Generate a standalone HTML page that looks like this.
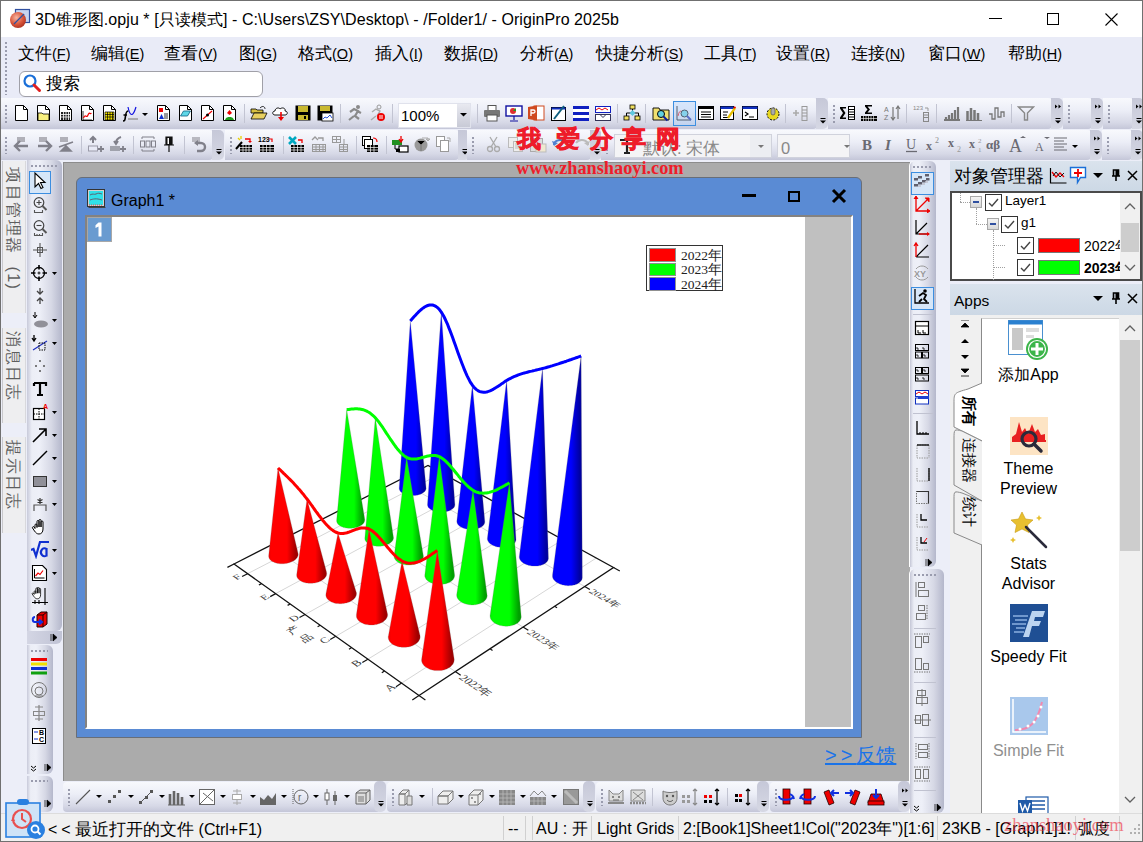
<!DOCTYPE html>
<html><head><meta charset="utf-8">
<style>
*{box-sizing:border-box;margin:0;padding:0}
html,body{width:1143px;height:842px;overflow:hidden}
body{position:relative;background:#eceef8;font-family:"Liberation Sans",sans-serif;color:#000}
.a{position:absolute}
.t{position:absolute;white-space:nowrap;line-height:1}
.tb{position:absolute;background:linear-gradient(#f8f9fd 0%,#eceef7 40%,#d6d8e6 80%,#c4c6d8 100%);border-radius:0 4px 4px 0}
.grip{position:absolute;width:2px;background:repeating-linear-gradient(#9a9cae 0 2px,transparent 2px 4px)}
.ic{position:absolute}
.sep{position:absolute;width:1px;background:#c2c4d2}
</style></head><body>
<!-- title bar -->
<div class="a" style="left:0;top:0;width:1143px;height:37px;background:#fff"></div>
<svg class="a" style="left:7px;top:5px" width="26" height="26" viewBox="0 0 26 26">
<rect x="8.5" y="4.5" width="14" height="13" fill="#c8d4f0" stroke="#3050a0" stroke-width="1.2"/>
<defs><radialGradient id="ogr" cx="0.4" cy="0.35" r="0.7"><stop offset="0" stop-color="#f7b5a0"/><stop offset="0.6" stop-color="#d9553a"/><stop offset="1" stop-color="#a83020"/></radialGradient></defs>
<circle cx="11" cy="15" r="8" fill="url(#ogr)"/>
<line x1="7" y1="19" x2="17" y2="9" stroke="#3050a0" stroke-width="1.3"/>
</svg>
<div class="t" style="left:35px;top:12px;font-size:16px;letter-spacing:0.07px">3D锥形图.opju * [只读模式] - C:\Users\ZSY\Desktop\ - /Folder1/ - OriginPro 2025b</div>
<div class="a" style="left:989px;top:18px;width:13px;height:1px;background:#000"></div>
<div class="a" style="left:1047px;top:13px;width:12px;height:12px;border:1px solid #000"></div>
<svg class="a" style="left:1104px;top:12px" width="15" height="15"><path d="M1.5 1.5L13.5 13.5M13.5 1.5L1.5 13.5" stroke="#000" stroke-width="1.1"/></svg>

<!-- menu bar -->
<div class="a" style="left:0;top:37px;width:1143px;height:61px;background:#e9ebf7"></div>
<div class="grip" style="left:5px;top:42px;height:53px"></div>
<div class="t" style="left:18px;top:45px;font-size:17px">文件<span style="font-size:14.5px">(<u>F</u>)</span></div>
<div class="t" style="left:91px;top:45px;font-size:17px">编辑<span style="font-size:14.5px">(<u>E</u>)</span></div>
<div class="t" style="left:164px;top:45px;font-size:17px">查看<span style="font-size:14.5px">(<u>V</u>)</span></div>
<div class="t" style="left:239px;top:45px;font-size:17px">图<span style="font-size:14.5px">(<u>G</u>)</span></div>
<div class="t" style="left:298px;top:45px;font-size:17px">格式<span style="font-size:14.5px">(<u>O</u>)</span></div>
<div class="t" style="left:375px;top:45px;font-size:17px">插入<span style="font-size:14.5px">(<u>I</u>)</span></div>
<div class="t" style="left:444px;top:45px;font-size:17px">数据<span style="font-size:14.5px">(<u>D</u>)</span></div>
<div class="t" style="left:520px;top:45px;font-size:17px">分析<span style="font-size:14.5px">(<u>A</u>)</span></div>
<div class="t" style="left:596px;top:45px;font-size:17px">快捷分析<span style="font-size:14.5px">(<u>S</u>)</span></div>
<div class="t" style="left:704px;top:45px;font-size:17px">工具<span style="font-size:14.5px">(<u>T</u>)</span></div>
<div class="t" style="left:776px;top:45px;font-size:17px">设置<span style="font-size:14.5px">(<u>R</u>)</span></div>
<div class="t" style="left:851px;top:45px;font-size:17px">连接<span style="font-size:14.5px">(<u>N</u>)</span></div>
<div class="t" style="left:928px;top:45px;font-size:17px">窗口<span style="font-size:14.5px">(<u>W</u>)</span></div>
<div class="t" style="left:1008px;top:45px;font-size:17px">帮助<span style="font-size:14.5px">(<u>H</u>)</span></div>
<div class="a" style="left:19px;top:71px;width:244px;height:26px;background:#fff;border:1px solid #a0a0a8;border-radius:6px"></div>
<svg class="a" style="left:22px;top:73px" width="20" height="20" viewBox="0 0 20 20"><circle cx="8" cy="8" r="5.5" fill="none" stroke="#1a6fd8" stroke-width="2.2"/><path d="M12 12L17.5 17.5" stroke="#e02020" stroke-width="3" stroke-linecap="round"/></svg>
<div class="t" style="left:46px;top:75px;font-size:17px">搜索</div>

<!-- toolbars -->
<div class="tb" style="left:0px;top:98px;width:817px;height:31px"></div><div class="grip" style="left:5px;top:105px;height:18px"></div>
<div class="a" style="left:816px;top:98px;width:12px;height:31px;background:linear-gradient(#c6c8d8,#d6d8e4);border-radius:0 5px 5px 0"></div><svg class="ic" style="left:818px;top:117px" width="10" height="8" viewBox="0 0 10 8"><path d="M2.5 1.5h5" stroke="#000" stroke-width="1"/><path d="M2 3.5h6l-3 3z" fill="#000"/></svg>
<div class="tb" style="left:828px;top:98px;width:224px;height:31px"></div><div class="grip" style="left:833px;top:105px;height:18px"></div>
<div class="a" style="left:1051px;top:98px;width:12px;height:31px;background:linear-gradient(#c6c8d8,#d6d8e4);border-radius:0 5px 5px 0"></div><svg class="ic" style="left:1053px;top:103px" width="10" height="8" viewBox="0 0 10 8"><path d="M2 1.5l2.5 2-2.5 2zM5.5 1.5l2.5 2-2.5 2z" fill="#000"/></svg><svg class="ic" style="left:1053px;top:117px" width="10" height="8" viewBox="0 0 10 8"><path d="M2.5 1.5h5" stroke="#000" stroke-width="1"/><path d="M2 3.5h6l-3 3z" fill="#000"/></svg>
<div class="tb" style="left:1063px;top:98px;width:29px;height:31px"></div><div class="grip" style="left:1068px;top:105px;height:18px"></div>
<div class="a" style="left:1091px;top:98px;width:12px;height:31px;background:linear-gradient(#c6c8d8,#d6d8e4);border-radius:0 5px 5px 0"></div><svg class="ic" style="left:1093px;top:103px" width="10" height="8" viewBox="0 0 10 8"><path d="M2 1.5l2.5 2-2.5 2zM5.5 1.5l2.5 2-2.5 2z" fill="#000"/></svg><svg class="ic" style="left:1093px;top:117px" width="10" height="8" viewBox="0 0 10 8"><path d="M2.5 1.5h5" stroke="#000" stroke-width="1"/><path d="M2 3.5h6l-3 3z" fill="#000"/></svg>
<div class="tb" style="left:1103px;top:98px;width:30px;height:31px"></div><div class="grip" style="left:1108px;top:105px;height:18px"></div>
<div class="a" style="left:1132px;top:98px;width:12px;height:31px;background:linear-gradient(#c6c8d8,#d6d8e4);border-radius:0 5px 5px 0"></div><svg class="ic" style="left:1134px;top:103px" width="10" height="8" viewBox="0 0 10 8"><path d="M2 1.5l2.5 2-2.5 2zM5.5 1.5l2.5 2-2.5 2z" fill="#000"/></svg><svg class="ic" style="left:1134px;top:117px" width="10" height="8" viewBox="0 0 10 8"><path d="M2.5 1.5h5" stroke="#000" stroke-width="1"/><path d="M2 3.5h6l-3 3z" fill="#000"/></svg>
<div class="tb" style="left:0px;top:130px;width:213px;height:30px"></div><div class="grip" style="left:5px;top:137px;height:17px"></div>
<div class="a" style="left:212px;top:130px;width:12px;height:30px;background:linear-gradient(#c6c8d8,#d6d8e4);border-radius:0 5px 5px 0"></div><svg class="ic" style="left:214px;top:148px" width="10" height="8" viewBox="0 0 10 8"><path d="M2.5 1.5h5" stroke="#000" stroke-width="1"/><path d="M2 3.5h6l-3 3z" fill="#000"/></svg>
<div class="tb" style="left:225px;top:130px;width:234px;height:30px"></div><div class="grip" style="left:230px;top:137px;height:17px"></div>
<div class="a" style="left:458px;top:130px;width:12px;height:30px;background:linear-gradient(#c6c8d8,#d6d8e4);border-radius:0 5px 5px 0"></div><svg class="ic" style="left:460px;top:148px" width="10" height="8" viewBox="0 0 10 8"><path d="M2.5 1.5h5" stroke="#000" stroke-width="1"/><path d="M2 3.5h6l-3 3z" fill="#000"/></svg>
<div class="tb" style="left:467px;top:130px;width:124px;height:30px"></div><div class="grip" style="left:472px;top:137px;height:17px"></div>
<div class="a" style="left:590px;top:130px;width:12px;height:30px;background:linear-gradient(#c6c8d8,#d6d8e4);border-radius:0 5px 5px 0"></div><svg class="ic" style="left:592px;top:148px" width="10" height="8" viewBox="0 0 10 8"><path d="M2.5 1.5h5" stroke="#000" stroke-width="1"/><path d="M2 3.5h6l-3 3z" fill="#000"/></svg>
<div class="tb" style="left:601px;top:130px;width:490px;height:30px"></div><div class="grip" style="left:606px;top:137px;height:17px"></div>
<div class="a" style="left:1090px;top:130px;width:12px;height:30px;background:linear-gradient(#c6c8d8,#d6d8e4);border-radius:0 5px 5px 0"></div><svg class="ic" style="left:1092px;top:135px" width="10" height="8" viewBox="0 0 10 8"><path d="M2 1.5l2.5 2-2.5 2zM5.5 1.5l2.5 2-2.5 2z" fill="#000"/></svg><svg class="ic" style="left:1092px;top:148px" width="10" height="8" viewBox="0 0 10 8"><path d="M2.5 1.5h5" stroke="#000" stroke-width="1"/><path d="M2 3.5h6l-3 3z" fill="#000"/></svg>
<div class="tb" style="left:1102px;top:130px;width:30px;height:30px"></div><div class="grip" style="left:1107px;top:137px;height:17px"></div>
<div class="a" style="left:1131px;top:130px;width:12px;height:30px;background:linear-gradient(#c6c8d8,#d6d8e4);border-radius:0 5px 5px 0"></div><svg class="ic" style="left:1133px;top:135px" width="10" height="8" viewBox="0 0 10 8"><path d="M2 1.5l2.5 2-2.5 2zM5.5 1.5l2.5 2-2.5 2z" fill="#000"/></svg><svg class="ic" style="left:1133px;top:148px" width="10" height="8" viewBox="0 0 10 8"><path d="M2.5 1.5h5" stroke="#000" stroke-width="1"/><path d="M2 3.5h6l-3 3z" fill="#000"/></svg>
<svg class="ic" style="left:13px;top:104px" width="18" height="18" viewBox="0 0 18 18"><path d="M2.5 1.5h8l4 4v11h-12z" fill="#fff" stroke="#000"/><path d="M10.5 1.5v4h4" fill="none" stroke="#000"/></svg>
<svg class="ic" style="left:35px;top:104px" width="18" height="18" viewBox="0 0 18 18"><path d="M2.5 1.5h8l4 4v11h-12z" fill="#fff" stroke="#000"/><path d="M10.5 1.5v4h4" fill="none" stroke="#000"/><path d="M3 9h4l1 1h6v6.5h-11z" fill="#f8f080" stroke="#000" stroke-width=".8"/></svg>
<svg class="ic" style="left:57px;top:104px" width="18" height="18" viewBox="0 0 18 18"><path d="M2.5 1.5h8l4 4v11h-12z" fill="#fff" stroke="#000"/><path d="M10.5 1.5v4h4" fill="none" stroke="#000"/><path d="M4 8h9v8h-9z" fill="#222"/><path d="M4 10.5h9M4 13h9M6.5 8v8M9 8v8M11.5 8v8" stroke="#fff" stroke-width=".8"/></svg>
<svg class="ic" style="left:79px;top:104px" width="18" height="18" viewBox="0 0 18 18"><path d="M2.5 1.5h8l4 4v11h-12z" fill="#fff" stroke="#000"/><path d="M10.5 1.5v4h4" fill="none" stroke="#000"/><path d="M4 7v9h9" fill="none" stroke="#000" stroke-width=".8"/><path d="M4.5 14c2-5 3 1 4.5-3s2 0 3.5-2" fill="none" stroke="#e00" stroke-width="1.2"/></svg>
<svg class="ic" style="left:101px;top:104px" width="18" height="18" viewBox="0 0 18 18"><path d="M2.5 1.5h8l4 4v11h-12z" fill="#fff" stroke="#000"/><path d="M10.5 1.5v4h4" fill="none" stroke="#000"/><path d="M4 8h9v8h-9z" fill="#f0e000" stroke="#000" stroke-width=".7"/><path d="M4 10.5h9M4 13h9M6.5 8v8M9 8v8M11.5 8v8" stroke="#000" stroke-width=".7"/></svg>
<svg class="ic" style="left:122px;top:104px" width="18" height="18" viewBox="0 0 18 18"><path d="M1 17c2 0 2-1 2.5-5s1-5 3-5M1.5 11h3.5" fill="none" stroke="#000" stroke-width="1.6"/><path d="M6 3c2 10 5 10 8 0" fill="none" stroke="#1010e0" stroke-width="1.2"/><path d="M6 15h10" stroke="#999" stroke-width="1.5"/></svg>
<svg class="ic" style="left:141px;top:106px" width="18" height="18" viewBox="0 0 18 18"><path d="M1 7h6l-3 3z" fill="#000"/></svg>
<svg class="ic" style="left:155px;top:104px" width="18" height="18" viewBox="0 0 18 18"><path d="M2.5 1.5h8l4 4v11h-12z" fill="#fff" stroke="#000"/><path d="M10.5 1.5v4h4" fill="none" stroke="#000"/><rect x="4" y="4" width="4" height="4" fill="#e00"/><path d="M4 15l2.5-5 2.5 5z" fill="#1030d0"/><path d="M9 10h4M9 12h4M9 14h4" stroke="#000" stroke-width=".8"/></svg>
<svg class="ic" style="left:177px;top:104px" width="18" height="18" viewBox="0 0 18 18"><path d="M2.5 1.5h8l4 4v11h-12z" fill="#fff" stroke="#000"/><path d="M10.5 1.5v4h4" fill="none" stroke="#000"/><path d="M3.5 12l3-5h7l-3 5z" fill="#60d8e8" stroke="#106080" stroke-width=".8"/></svg>
<svg class="ic" style="left:199px;top:104px" width="18" height="18" viewBox="0 0 18 18"><path d="M2.5 1.5h8l4 4v11h-12z" fill="#fff" stroke="#000"/><path d="M10.5 1.5v4h4" fill="none" stroke="#000"/><path d="M4 15l9-8" stroke="#e00" stroke-width="1.2"/><circle cx="8.5" cy="11" r="1.5" fill="#000"/></svg>
<svg class="ic" style="left:221px;top:104px" width="18" height="18" viewBox="0 0 18 18"><path d="M2.5 1.5h8l4 4v11h-12z" fill="#fff" stroke="#000"/><path d="M10.5 1.5v4h4" fill="none" stroke="#000"/><path d="M6 9l2.5-3 2.5 3-2.5 2z" fill="#e00"/><path d="M4 16c1-3 3-3 4.5-3s3.5 0 4.5 3z" fill="#20a020"/></svg>
<svg class="ic" style="left:250px;top:104px" width="18" height="18" viewBox="0 0 18 18"><path d="M1 5h5l1 1h6v3h-12z" fill="#d8c040" stroke="#000" stroke-width=".8"/><path d="M1 15l3-6h13l-3 6z" fill="#e8d060" stroke="#000" stroke-width=".8"/><path d="M10 4c3-3 5-1 5 1" fill="none" stroke="#000" stroke-width=".8"/></svg>
<svg class="ic" style="left:272px;top:104px" width="18" height="18" viewBox="0 0 18 18"><path d="M3 11c-3 0-3-4 0-4 0-3 4-4 5-2 2-2 6-1 5 2 3 0 3 4 0 4z" fill="#fff" stroke="#000" stroke-width=".9"/><path d="M9 8v7" stroke="#e00" stroke-width="1.6"/><path d="M6 13h6l-3 4z" fill="#e00"/></svg>
<svg class="ic" style="left:294px;top:104px" width="18" height="18" viewBox="0 0 18 18"><path d="M1.5 1.5h15v15h-15z" fill="#000"/><rect x="4" y="2" width="10" height="6" fill="#c8b830"/><rect x="4" y="11" width="10" height="5" fill="#c8b830"/><rect x="10" y="12" width="2" height="3" fill="#000"/></svg>
<svg class="ic" style="left:316px;top:104px" width="18" height="18" viewBox="0 0 18 18"><path d="M1.5 1.5h15v15h-15z" fill="#000"/><rect x="4" y="2" width="10" height="5" fill="#c8b830"/><rect x="6" y="9" width="11" height="8" fill="#fff" stroke="#000" stroke-width=".8"/><path d="M7 15l2-2 2 1 3-3 2 3" fill="none" stroke="#1040d0" stroke-width=".9"/></svg>
<svg class="ic" style="left:346px;top:104px" width="18" height="18" viewBox="0 0 18 18"><circle cx="12" cy="3" r="2" fill="#8a8a8a"/><path d="M4 8l4-3 4 2-3 5 4 3M8 12l-5 4M11 7l4 2" fill="none" stroke="#8a8a8a" stroke-width="2.2"/></svg>
<svg class="ic" style="left:368px;top:104px" width="18" height="18" viewBox="0 0 18 18"><circle cx="11" cy="3" r="2" fill="none" stroke="#999"/><path d="M4 8l4-3 4 2-3 5M8 12l-5 4" fill="none" stroke="#aaa" stroke-width="1.4"/><circle cx="13" cy="13" r="4" fill="#e00"/><path d="M12 11v4M14 11v4" stroke="#fff"/></svg>
<svg class="ic" style="left:483px;top:104px" width="18" height="18" viewBox="0 0 18 18"><rect x="5" y="1.5" width="8" height="5" fill="#fff" stroke="#555"/><rect x="1" y="6" width="16" height="7" rx="1" fill="#777"/><rect x="4" y="11" width="10" height="6" fill="#fff" stroke="#555"/></svg>
<svg class="ic" style="left:505px;top:104px" width="18" height="18" viewBox="0 0 18 18"><rect x="1" y="2" width="16" height="10" fill="#fff" stroke="#1010a0" stroke-width="1.4"/><circle cx="8" cy="7" r="3" fill="#e03030"/><path d="M8 7h3v-3" fill="#20a020"/><path d="M9 12v4M5 17h8" stroke="#1010a0" stroke-width="1.2"/></svg>
<svg class="ic" style="left:527px;top:104px" width="18" height="18" viewBox="0 0 18 18"><rect x="7" y="2" width="10" height="14" fill="#fff" stroke="#d04a20"/><path d="M1 3l9-1.5v15l-9-1.5z" fill="#d04a20"/><path d="M4 12V6h2.5a1.5 1.5 0 010 3H4" fill="none" stroke="#fff" stroke-width="1.3"/></svg>
<svg class="ic" style="left:550px;top:104px" width="18" height="18" viewBox="0 0 18 18"><rect x="1.5" y="3.5" width="14" height="13" fill="#fff" stroke="#000"/><rect x="1.5" y="3.5" width="14" height="2" fill="#1030c0"/><path d="M4 15l10-13" stroke="#106080" stroke-width="2"/></svg>
<svg class="ic" style="left:572px;top:104px" width="18" height="18" viewBox="0 0 18 18"><rect x="1" y="2" width="16" height="14" fill="#fff"/><rect x="1" y="2" width="16" height="3" fill="#1020c0"/><rect x="1" y="8" width="16" height="3" fill="#1020c0"/><rect x="1" y="14" width="16" height="3" fill="#1020c0"/></svg>
<svg class="ic" style="left:594px;top:104px" width="18" height="18" viewBox="0 0 18 18"><rect x="1.5" y="2.5" width="15" height="6" fill="#fff" stroke="#1020c0"/><path d="M2 6l3-2 3 2 3-2 3 2" stroke="#e00" fill="none"/><rect x="1.5" y="10.5" width="15" height="6" fill="#fff" stroke="#335"/><path d="M6 10.5l3 3 3-3" fill="none" stroke="#335"/></svg>
<svg class="ic" style="left:623px;top:104px" width="18" height="18" viewBox="0 0 18 18"><rect x="7" y="1" width="5" height="4" fill="#f0e060" stroke="#000" stroke-width=".8"/><rect x="1" y="12" width="5" height="4" fill="#f0e060" stroke="#000" stroke-width=".8"/><rect x="12" y="12" width="5" height="4" fill="#f0e060" stroke="#000" stroke-width=".8"/><path d="M9.5 5v3M3.5 12V9h12v3" fill="none" stroke="#000"/><path d="M9.5 6l3 3-3 3-3-3z" fill="#60c8e0"/></svg>
<svg class="ic" style="left:652px;top:104px" width="18" height="18" viewBox="0 0 18 18"><path d="M1 4h6l1 2h9v10h-16z" fill="#f0e070" stroke="#000" stroke-width=".9"/><circle cx="9" cy="10" r="3.5" fill="#60d0e0" stroke="#000"/><path d="M11.5 12.5l4 4" stroke="#1020a0" stroke-width="2"/></svg>
<svg class="ic" style="left:675px;top:104px" width="18" height="18" viewBox="0 0 18 18"><path d="M2 2v14h14" fill="none" stroke="#000"/><path d="M3 12c2-9 4-2 6-5" fill="none" stroke="#e00"/><circle cx="9.5" cy="9.5" r="3.5" fill="#60d0e0" stroke="#000"/><path d="M12 12l4 4" stroke="#1020a0" stroke-width="2"/></svg>
<svg class="ic" style="left:697px;top:104px" width="18" height="18" viewBox="0 0 18 18"><rect x="1.5" y="2.5" width="15" height="13" fill="#fff" stroke="#000"/><rect x="1.5" y="2.5" width="15" height="2.5" fill="#000"/><path d="M4 8h10M4 10.5h10M4 13h10" stroke="#000"/></svg>
<svg class="ic" style="left:719px;top:104px" width="18" height="18" viewBox="0 0 18 18"><rect x="1.5" y="2.5" width="13" height="13" fill="#fff" stroke="#000"/><rect x="1.5" y="2.5" width="13" height="2.5" fill="#1030c0"/><path d="M4 8h5M4 11h4M4 13.5h6" stroke="#000"/><path d="M9 14l7-10" stroke="#e8c000" stroke-width="2.2"/><path d="M15 3l1.5 1" stroke="#e00" stroke-width="2"/></svg>
<svg class="ic" style="left:741px;top:104px" width="18" height="18" viewBox="0 0 18 18"><rect x="1.5" y="2.5" width="15" height="13" fill="#fff" stroke="#000"/><rect x="1.5" y="2.5" width="15" height="2.5" fill="#1030c0"/><path d="M4 8l3 2-3 2M8 13h5" fill="none" stroke="#000" stroke-width="1.2"/></svg>
<svg class="ic" style="left:764px;top:104px" width="18" height="18" viewBox="0 0 18 18"><circle cx="9" cy="10" r="6" fill="#e8d820" stroke="#000" stroke-width="1" stroke-dasharray="2 1.4"/><rect x="7" y="4" width="4" height="7" rx="2" fill="#aaa" stroke="#555" stroke-width=".7"/></svg>
<svg class="ic" style="left:792px;top:104px" width="18" height="18" viewBox="0 0 18 18"><path d="M1 9h6M4 6v6" stroke="#aaa" stroke-width="1.6"/><rect x="10" y="2.5" width="5" height="14" fill="none" stroke="#999"/><path d="M10 6h5M10 9h5M10 12h5" stroke="#999"/></svg>
<svg class="ic" style="left:838px;top:104px" width="18" height="18" viewBox="0 0 18 18"><path d="M2 3h6v1.5H4.5l3 4.5-3 4.5H8V15H2v-1.5l3-4.5-3-4.5z" fill="#000"/><rect x="10.5" y="2.5" width="6" height="13" fill="#fff" stroke="#000"/><path d="M10.5 5.5h6M10.5 8h6M10.5 10.5h6M10.5 13h6" stroke="#000" stroke-width="1.1"/></svg>
<svg class="ic" style="left:860px;top:104px" width="18" height="18" viewBox="0 0 18 18"><path d="M5 1h7v1.5H7.5l2.5 3-2.5 3H12V10H5V8.5l2.5-3L5 2.5z" fill="#000"/><rect x="1" y="12" width="16" height="5" fill="#000"/><path d="M1 14.5h16M3.5 12v5M6 12v5M8.5 12v5M11 12v5M13.5 12v5" stroke="#fff" stroke-width=".6"/></svg>
<svg class="ic" style="left:883px;top:104px" width="18" height="18" viewBox="0 0 18 18"><text x="1" y="8" font-size="7" fill="#777" font-family="Liberation Sans">A</text><text x="1" y="16" font-size="7" fill="#777" font-family="Liberation Sans">Z</text><path d="M10 3v12M15 15V3M8 13l2 3 2-3M13 5l2-3 2 3" fill="none" stroke="#777" stroke-width="1.2"/></svg>
<svg class="ic" style="left:913px;top:104px" width="18" height="18" viewBox="0 0 18 18"><text x="0" y="6" font-size="6" fill="#888" font-family="Liberation Sans">123</text><path d="M12 4h3v3" fill="none" stroke="#999"/><rect x="10.5" y="8.5" width="5" height="9" fill="none" stroke="#888"/><path d="M10.5 11h5M10.5 13.5h5" stroke="#888"/></svg>
<svg class="ic" style="left:943px;top:104px" width="18" height="18" viewBox="0 0 18 18"><path d="M1 16h16M3 16v-3M6 16v-5M9 16v-7M12 16v-10M15 16v-13" stroke="#777" stroke-width="2.2"/></svg>
<svg class="ic" style="left:965px;top:104px" width="18" height="18" viewBox="0 0 18 18"><path d="M1 16.5h16" stroke="#777"/><path d="M2.5 16V7M6 16V4M9.5 16V6M13 16V9" stroke="#777" stroke-width="2.5"/></svg>
<svg class="ic" style="left:987px;top:104px" width="18" height="18" viewBox="0 0 18 18"><path d="M2 10h3v5h3V4h3v9h3V8h3v5" fill="none" stroke="#777" stroke-width="1.3"/></svg>
<svg class="ic" style="left:1017px;top:104px" width="18" height="18" viewBox="0 0 18 18"><path d="M1.5 3h15l-6 6v7h-3V9z" fill="none" stroke="#888" stroke-width="1.4"/></svg>
<div class="sep" style="left:244px;top:104px;height:19px"></div>
<div class="sep" style="left:340px;top:104px;height:19px"></div>
<div class="sep" style="left:392px;top:104px;height:19px"></div>
<div class="sep" style="left:477px;top:104px;height:19px"></div>
<div class="sep" style="left:617px;top:104px;height:19px"></div>
<div class="sep" style="left:645px;top:104px;height:19px"></div>
<div class="sep" style="left:785px;top:104px;height:19px"></div>
<div class="sep" style="left:906px;top:104px;height:19px"></div>
<div class="sep" style="left:936px;top:104px;height:19px"></div>
<div class="sep" style="left:1011px;top:104px;height:19px"></div>
<div class="a" style="left:398px;top:103px;width:73px;height:25px;background:#fff;border:1px solid #e0e2ec"></div>
<div class="a" style="left:457px;top:104px;width:13px;height:23px;background:linear-gradient(#e8e9f0,#c8cad6)"></div>
<svg class="ic" style="left:459px;top:112px" width="10" height="6" viewBox="0 0 10 6"><path d="M1 1h7l-3.5 3.5z" fill="#000"/></svg>
<div class="t" style="left:401px;top:108px;font-size:15px">100%</div>
<div class="a" style="left:673px;top:101px;width:23px;height:25px;border:1px solid #3c8ee0;background:rgba(180,210,250,.45)"></div>
<svg class="ic" style="left:13px;top:135px" width="18" height="18" viewBox="0 0 18 18"><rect x="4" y="2" width="8" height="5" fill="#b0b0b8"/><path d="M2 11h13M7 6l-5 5 5 5" fill="none" stroke="#80808a" stroke-width="2.4"/></svg>
<svg class="ic" style="left:35px;top:135px" width="18" height="18" viewBox="0 0 18 18"><rect x="4" y="2" width="8" height="5" fill="#b0b0b8"/><path d="M3 11h13M11 6l5 5-5 5" fill="none" stroke="#80808a" stroke-width="2.4"/></svg>
<svg class="ic" style="left:57px;top:135px" width="18" height="18" viewBox="0 0 18 18"><rect x="3" y="2" width="8" height="5" fill="#b0b0b8"/><path d="M2 12l14-5M4 16l5-5 5 5z" fill="#80808a" stroke="#80808a" stroke-width="1.6"/></svg>
<svg class="ic" style="left:87px;top:135px" width="18" height="18" viewBox="0 0 18 18"><path d="M6 8V3M3 5l3-3 3 3" fill="none" stroke="#80808a" stroke-width="2"/><rect x="1.5" y="11" width="9" height="5" fill="#e8eaf6" stroke="#9a9aa8"/><path d="M11 14h6M14 11v6" stroke="#80808a" stroke-width="1.8"/></svg>
<svg class="ic" style="left:109px;top:135px" width="18" height="18" viewBox="0 0 18 18"><path d="M7 8c0-3 2-5 5-6M5 6l2 3 2-3" fill="none" stroke="#80808a" stroke-width="2"/><rect x="1" y="11" width="10" height="5" fill="#a0a2ac"/><path d="M11 14h6M14 11v6" stroke="#80808a" stroke-width="1.8"/></svg>
<svg class="ic" style="left:139px;top:135px" width="18" height="18" viewBox="0 0 18 18"><rect x="1.5" y="6" width="4" height="6" fill="none" stroke="#80808a"/><rect x="7" y="6" width="4" height="6" fill="none" stroke="#80808a"/><rect x="12.5" y="6" width="4" height="6" fill="none" stroke="#80808a"/><path d="M3 4V2h12v2M15 14v2H3v-2" fill="none" stroke="#80808a"/></svg>
<svg class="ic" style="left:160px;top:135px" width="18" height="18" viewBox="0 0 18 18"><path d="M6 2h6v8H6zM4 10h10M9 10v7" fill="#111" stroke="#111" stroke-width="1.2"/><rect x="7.5" y="3" width="1.5" height="6" fill="#fff"/></svg>
<svg class="ic" style="left:190px;top:135px" width="18" height="18" viewBox="0 0 18 18"><rect x="2" y="2" width="8" height="5" fill="#b8b8c0"/><path d="M6 8h5a4 4 0 010 8H7" fill="none" stroke="#80808a" stroke-width="2.4"/><path d="M4 8l4-3v6z" fill="#80808a"/></svg>
<svg class="ic" style="left:235px;top:135px" width="18" height="18" viewBox="0 0 18 18"><path d="M1 14l6-7" stroke="#000" stroke-width="2"/><path d="M3 3l2 2M6 1v3" stroke="#e8d000" stroke-width="1.3"/><rect x="5" y="10" width="12" height="7" fill="#000"/><path d="M5 12.5h12M5 15h12M8 10v7M11 10v7M14 10v7" stroke="#fff" stroke-width=".7"/><path d="M10 4h5v3" fill="none" stroke="#e00" stroke-width="1.3"/><path d="M13 6h4l-2 2z" fill="#e00"/></svg>
<svg class="ic" style="left:257px;top:135px" width="18" height="18" viewBox="0 0 18 18"><text x="1" y="7" font-size="7" font-weight="bold" fill="#000" font-family="Liberation Sans">123</text><path d="M12 4h3v3" fill="none" stroke="#e00" stroke-width="1.2"/><rect x="3" y="10" width="14" height="7" fill="#000"/><path d="M3 12.5h14M3 15h14M6 10v7M9.5 10v7M13 10v7" stroke="#fff" stroke-width=".7"/></svg>
<svg class="ic" style="left:287px;top:135px" width="18" height="18" viewBox="0 0 18 18"><path d="M2 2l7 7M9 2l-7 7" stroke="#00a8c0" stroke-width="2.6"/><rect x="4" y="10" width="13" height="7" fill="#000"/><path d="M4 12.5h13M4 15h13M7 10v7M10.5 10v7M14 10v7" stroke="#fff" stroke-width=".7"/><path d="M11 5h4v3" fill="none" stroke="#e00" stroke-width="1.3"/></svg>
<svg class="ic" style="left:309px;top:135px" width="18" height="18" viewBox="0 0 18 18"><path d="M3 5l3-3 3 3M9 3h5v3" fill="none" stroke="#999" stroke-width="1.3"/><rect x="3.5" y="9.5" width="13" height="7" fill="none" stroke="#999"/><path d="M3.5 12h13M3.5 14.5h13M7 9.5v7M10.5 9.5v7M14 9.5v7" stroke="#999"/></svg>
<svg class="ic" style="left:331px;top:135px" width="18" height="18" viewBox="0 0 18 18"><rect x="1.5" y="1.5" width="8" height="6" fill="none" stroke="#999"/><path d="M1.5 4.5h8M5.5 1.5v6M13 4v5" stroke="#999"/><rect x="8.5" y="9.5" width="8" height="7" fill="none" stroke="#999"/><path d="M8.5 12h8M8.5 14.5h8M12.5 9.5v7" stroke="#999"/></svg>
<svg class="ic" style="left:361px;top:135px" width="18" height="18" viewBox="0 0 18 18"><rect x="1.5" y="1.5" width="8" height="9" fill="#fff" stroke="#000"/><rect x="3.5" y="4.5" width="8" height="9" fill="#fff" stroke="#000"/><rect x="6" y="10" width="11" height="7" fill="#000"/><path d="M6 12.5h11M6 15h11M9.5 10v7M13 10v7" stroke="#fff" stroke-width=".7"/><path d="M12 3c3 0 4 2 4 4" fill="none" stroke="#e00" stroke-width="1.2"/></svg>
<svg class="ic" style="left:391px;top:135px" width="18" height="18" viewBox="0 0 18 18"><rect x="1" y="5" width="10" height="5" fill="#209020"/><path d="M10 1v5M8 4l2 3 2-3" fill="none" stroke="#e00" stroke-width="1.3"/><rect x="8" y="11" width="9" height="6" fill="#fff" stroke="#000" stroke-width="1.2"/><path d="M4 10v4h4" fill="none" stroke="#000"/><rect x="5" y="14" width="4" height="3" fill="#000"/></svg>
<svg class="ic" style="left:413px;top:135px" width="18" height="18" viewBox="0 0 18 18"><circle cx="8" cy="10" r="6.5" fill="#999"/><path d="M4 6l4 4 4-4M8 10v6" stroke="#777"/><path d="M9 3h6v3M13 4h4l-2 2z" fill="none" stroke="#aaa"/></svg>
<svg class="ic" style="left:435px;top:135px" width="18" height="18" viewBox="0 0 18 18"><rect x="1.5" y="1.5" width="8" height="10" fill="#fff" stroke="#999"/><rect x="5.5" y="5.5" width="8" height="11" fill="#fff" stroke="#999"/><path d="M12 3h3v4" fill="none" stroke="#aaa"/></svg>
<svg class="ic" style="left:485px;top:135px" width="18" height="18" viewBox="0 0 18 18"><circle cx="5" cy="14" r="2.5" fill="none" stroke="#aaa" stroke-width="1.3"/><circle cx="12" cy="14" r="2.5" fill="none" stroke="#aaa" stroke-width="1.3"/><path d="M6 12l6-10M11 12L5 2" stroke="#aaa" stroke-width="1.3"/></svg>
<svg class="ic" style="left:507px;top:135px" width="18" height="18" viewBox="0 0 18 18"><rect x="1.5" y="2.5" width="9" height="10" fill="#eee" stroke="#bbb"/><rect x="6.5" y="6.5" width="9" height="10" fill="#eee" stroke="#bbb"/><path d="M8 9h6M8 11h6M8 13h6" stroke="#bbb"/></svg>
<svg class="ic" style="left:529px;top:135px" width="18" height="18" viewBox="0 0 18 18"><rect x="1.5" y="3.5" width="12" height="13" fill="#ddd" stroke="#aaa"/><rect x="7" y="9" width="10" height="8" fill="#f0e8d0" stroke="#bbb"/></svg>
<svg class="ic" style="left:551px;top:135px" width="18" height="18" viewBox="0 0 18 18"><path d="M3 10c0-5 8-7 12-2" fill="none" stroke="#5080d0" stroke-width="2"/><path d="M1 6l2 5 4-3z" fill="#5080d0"/></svg>
<svg class="ic" style="left:573px;top:135px" width="18" height="18" viewBox="0 0 18 18"><path d="M15 10c0-5-8-7-12-2" fill="none" stroke="#bbb" stroke-width="2"/><path d="M17 6l-2 5-4-3z" fill="#bbb"/></svg>
<svg class="ic" style="left:860px;top:135px" width="18" height="18" viewBox="0 0 18 18"><text x="2" y="15" font-size="15" font-weight="bold" fill="#6a6a72" font-family="Liberation Serif">B</text></svg>
<svg class="ic" style="left:882px;top:135px" width="18" height="18" viewBox="0 0 18 18"><text x="3" y="15" font-size="15" font-style="italic" font-weight="bold" fill="#6a6a72" font-family="Liberation Serif">I</text></svg>
<svg class="ic" style="left:904px;top:135px" width="18" height="18" viewBox="0 0 18 18"><text x="2" y="14" font-size="14" fill="#6a6a72" font-family="Liberation Serif">U</text><path d="M2 16.5h11" stroke="#6a6a72" stroke-width="1.3"/></svg>
<svg class="ic" style="left:925px;top:135px" width="18" height="18" viewBox="0 0 18 18"><text x="1" y="15" font-size="12" font-weight="bold" fill="#6a6a72" font-family="Liberation Serif">x</text><text x="10" y="8" font-size="8" fill="#888" font-family="Liberation Serif">2</text></svg>
<svg class="ic" style="left:947px;top:135px" width="18" height="18" viewBox="0 0 18 18"><text x="1" y="12" font-size="12" font-weight="bold" fill="#6a6a72" font-family="Liberation Serif">x</text><text x="10" y="17" font-size="8" fill="#999" font-family="Liberation Serif">2</text></svg>
<svg class="ic" style="left:968px;top:135px" width="18" height="18" viewBox="0 0 18 18"><text x="1" y="13" font-size="12" font-weight="bold" fill="#6a6a72" font-family="Liberation Serif">x</text><text x="10" y="8" font-size="7" fill="#999" font-family="Liberation Serif">2</text><text x="10" y="17" font-size="7" fill="#999" font-family="Liberation Serif">1</text></svg>
<svg class="ic" style="left:986px;top:135px" width="18" height="18" viewBox="0 0 18 18"><text x="0" y="14" font-size="13" font-weight="bold" fill="#6a6a72" font-family="Liberation Serif">αβ</text></svg>
<svg class="ic" style="left:1009px;top:135px" width="18" height="18" viewBox="0 0 18 18"><text x="0" y="17" font-size="18" fill="#6a6a72" font-family="Liberation Serif">A</text><path d="M11 3l3-2 3 2z" fill="#6a6a72"/></svg>
<svg class="ic" style="left:1034px;top:135px" width="18" height="18" viewBox="0 0 18 18"><text x="1" y="16" font-size="12" fill="#6a6a72" font-family="Liberation Serif">A</text><path d="M10 2h6l-3 2z" fill="#6a6a72"/></svg>
<svg class="ic" style="left:1053px;top:135px" width="18" height="18" viewBox="0 0 18 18"><path d="M1 3h13M1 6h10M1 9h13M1 12h10M1 15h13" stroke="#6a6a72" stroke-width="1.1"/></svg>
<svg class="ic" style="left:1071px;top:138px" width="18" height="18" viewBox="0 0 18 18"><path d="M1 7h6l-3 3z" fill="#000"/></svg>
<div class="sep" style="left:81px;top:136px;height:18px"></div>
<div class="sep" style="left:133px;top:136px;height:18px"></div>
<div class="sep" style="left:184px;top:136px;height:18px"></div>
<div class="sep" style="left:283px;top:136px;height:18px"></div>
<div class="sep" style="left:356px;top:136px;height:18px"></div>
<div class="sep" style="left:386px;top:136px;height:18px"></div>
<div class="sep" style="left:700px;top:136px;height:18px"></div>
<div class="a" style="left:614px;top:134px;width:158px;height:24px;background:#f4f4f6;border:1px solid #d0d2dc"></div>
<div class="a" style="left:750px;top:135px;width:21px;height:22px;background:#eceef2"></div>
<svg class="ic" style="left:757px;top:144px" width="8" height="5" viewBox="0 0 8 5"><path d="M1 1h6l-3 3z" fill="#777"/></svg>
<svg class="ic" style="left:618px;top:137px" width="18" height="18" viewBox="0 0 18 18"><path d="M2 3h14M9 3v13M6 16h6" stroke="#222" stroke-width="2.2"/></svg>
<div class="t" style="left:643px;top:140px;font-size:16.5px;color:#888">默认: 宋体</div>
<div class="a" style="left:777px;top:134px;width:73px;height:24px;background:#f4f4f6;border:1px solid #d0d2dc"></div>
<svg class="ic" style="left:843px;top:144px" width="8" height="5" viewBox="0 0 8 5"><path d="M1 1h6l-3 3z" fill="#777"/></svg>
<div class="t" style="left:781px;top:140px;font-size:16.5px;color:#888">0</div>
<!-- left panels -->
<div class="a" style="left:2px;top:161px;width:24px;height:152px;background:#eeeef0;border-left:1px solid #c8c8cc;border-right:1px solid #d8d8dc"></div>
<div class="a" style="left:2px;top:328px;width:24px;height:95px;background:#eeeef0;border-left:1px solid #c8c8cc;border-right:1px solid #d8d8dc"></div>
<div class="a" style="left:2px;top:437px;width:24px;height:96px;background:#eeeef0;border-left:1px solid #c8c8cc;border-right:1px solid #d8d8dc"></div>
<div class="t" style="left:21px;top:167px;font-size:16px;color:#5e5e5e;letter-spacing:1.5px;transform:rotate(90deg);transform-origin:0 0">项目管理器&nbsp; (1)</div>
<div class="t" style="left:21px;top:331px;font-size:16px;color:#5e5e5e;letter-spacing:1.5px;transform:rotate(90deg);transform-origin:0 0">消息日志</div>
<div class="t" style="left:21px;top:440px;font-size:16px;color:#5e5e5e;letter-spacing:1.5px;transform:rotate(90deg);transform-origin:0 0">提示日志</div>
<div class="a" style="left:27px;top:160px;width:35px;height:471px;background:linear-gradient(90deg,#c8cada 0%,#eceef6 14%,#eef0f8 35%,#d6d8e5 70%,#b4b7cb 100%);border-radius:0 6px 6px 0"></div>
<div class="a" style="left:27px;top:631px;width:35px;height:13px;background:linear-gradient(90deg,#d4d6e4,#c0c3d5);border-radius:0 0 6px 0"></div>
<div class="a" style="left:31px;top:165px;width:26px;height:2px;background:repeating-linear-gradient(90deg,#9a9cae 0 2px,transparent 2px 4px)"></div>
<div class="a" style="left:27px;top:645px;width:26px;height:129px;background:linear-gradient(90deg,#c8cada 0%,#eceef6 14%,#eef0f8 35%,#d6d8e5 70%,#b4b7cb 100%);border-radius:0 6px 6px 0"></div>
<div class="a" style="left:31px;top:650px;width:17px;height:2px;background:repeating-linear-gradient(90deg,#9a9cae 0 2px,transparent 2px 4px)"></div>
<div class="a" style="left:27px;top:776px;width:26px;height:36px;background:linear-gradient(90deg,#c8cada 0%,#eceef6 14%,#eef0f8 35%,#d6d8e5 70%,#b4b7cb 100%);border-radius:0 6px 6px 0"></div>
<div class="a" style="left:31px;top:780px;width:17px;height:2px;background:repeating-linear-gradient(90deg,#9a9cae 0 2px,transparent 2px 4px)"></div>
<div class="a" style="left:29px;top:171px;width:22px;height:23px;border:1px solid #3c8ee0;background:#d6e6f8"></div>
<svg class="ic" style="left:31px;top:172px" width="18" height="18" viewBox="0 0 18 18"><path d="M4 1v14l3.5-3.5 2.5 5 2-1-2.5-5H14z" fill="#fff" stroke="#000" stroke-width="1.1"/></svg>
<svg class="ic" style="left:31px;top:196px" width="18" height="18" viewBox="0 0 18 18"><circle cx="8" cy="6.5" r="4.8" fill="none" stroke="#444" stroke-width="1.2"/><path d="M5.5 6.5h5M8 4v5" stroke="#444" stroke-width="1.1"/><path d="M11.5 10l4 4" stroke="#555" stroke-width="2"/><path d="M3.5 14v2.5h8V14" fill="none" stroke="#555" stroke-width="1.1"/></svg>
<svg class="ic" style="left:31px;top:219px" width="18" height="18" viewBox="0 0 18 18"><circle cx="8" cy="6.5" r="4.8" fill="none" stroke="#444" stroke-width="1.2"/><path d="M5.5 6.5h5" stroke="#444" stroke-width="1.1"/><path d="M11.5 10l4 4" stroke="#555" stroke-width="2"/><path d="M3.5 14v2.5h8V14M6 16.5V15M8.5 16.5V15" fill="none" stroke="#555" stroke-width="1.1"/></svg>
<svg class="ic" style="left:31px;top:241px" width="18" height="18" viewBox="0 0 18 18"><path d="M9 2v14M2 9h14" stroke="#555" stroke-width="1.1"/><rect x="6.5" y="6.5" width="5" height="5" fill="none" stroke="#555"/></svg>
<svg class="ic" style="left:31px;top:264px" width="18" height="18" viewBox="0 0 18 18"><circle cx="8" cy="9" r="5.5" fill="none" stroke="#000" stroke-width="1.3"/><path d="M8 1v4.5M8 12.5V17M0 9h4.5M11.5 9H16" stroke="#000" stroke-width="1.6"/><path d="M6.5 9h3M8 7.5v3" stroke="#000" stroke-width=".9"/></svg>
<svg class="ic" style="left:52px;top:272px" width="6" height="4" viewBox="0 0 6 4"><path d="M0 0h5l-2.5 3z" fill="#000"/></svg>
<svg class="ic" style="left:31px;top:287px" width="18" height="18" viewBox="0 0 18 18"><path d="M9 1v5M6 4l3 3 3-3M9 17v-5M6 14l3-3 3 3" fill="none" stroke="#444" stroke-width="1.3"/></svg>
<svg class="ic" style="left:31px;top:311px" width="18" height="18" viewBox="0 0 18 18"><path d="M4 1v5M2 4l2 3 2-3" stroke="#000" fill="none"/><ellipse cx="10" cy="13" rx="7" ry="3.5" fill="#909098"/></svg>
<svg class="ic" style="left:52px;top:319px" width="6" height="4" viewBox="0 0 6 4"><path d="M0 0h5l-2.5 3z" fill="#000"/></svg>
<svg class="ic" style="left:31px;top:334px" width="18" height="18" viewBox="0 0 18 18"><path d="M3 1v5M1 4l2 3 2-3" stroke="#000" fill="none" stroke-width="1.3"/><path d="M2 16l14-9" stroke="#2030c0" stroke-width="1.2"/><path d="M8 9h6v7H8z" fill="none" stroke="#000" stroke-dasharray="1.5 1"/></svg>
<svg class="ic" style="left:52px;top:342px" width="6" height="4" viewBox="0 0 6 4"><path d="M0 0h5l-2.5 3z" fill="#000"/></svg>
<svg class="ic" style="left:31px;top:357px" width="18" height="18" viewBox="0 0 18 18"><circle cx="9" cy="4" r="1" fill="#555"/><circle cx="5" cy="9" r="1" fill="#555"/><circle cx="13" cy="9" r="1" fill="#555"/><circle cx="9" cy="14" r="1" fill="#555"/></svg>
<svg class="ic" style="left:31px;top:380px" width="18" height="18" viewBox="0 0 18 18"><path d="M3 3h12v3M9 3v12M6 15h6M3 3v3" fill="none" stroke="#000" stroke-width="2.2"/></svg>
<svg class="ic" style="left:31px;top:403px" width="18" height="18" viewBox="0 0 18 18"><rect x="2.5" y="5.5" width="11" height="11" fill="#fff" stroke="#000" stroke-width="1.2"/><path d="M2.5 11h11M8 5.5v11" stroke="#000" stroke-dasharray="1.5 1"/><text x="12" y="6" font-size="7" fill="#e00" font-family="Liberation Sans" font-weight="bold">A</text></svg>
<svg class="ic" style="left:52px;top:411px" width="6" height="4" viewBox="0 0 6 4"><path d="M0 0h5l-2.5 3z" fill="#000"/></svg>
<svg class="ic" style="left:31px;top:426px" width="18" height="18" viewBox="0 0 18 18"><path d="M2 16L15 3M8 3h7v7" fill="none" stroke="#000" stroke-width="1.6"/></svg>
<svg class="ic" style="left:52px;top:434px" width="6" height="4" viewBox="0 0 6 4"><path d="M0 0h5l-2.5 3z" fill="#000"/></svg>
<svg class="ic" style="left:31px;top:449px" width="18" height="18" viewBox="0 0 18 18"><path d="M2 16L16 2" stroke="#000" stroke-width="1.4"/></svg>
<svg class="ic" style="left:52px;top:457px" width="6" height="4" viewBox="0 0 6 4"><path d="M0 0h5l-2.5 3z" fill="#000"/></svg>
<svg class="ic" style="left:31px;top:472px" width="18" height="18" viewBox="0 0 18 18"><rect x="2.5" y="4.5" width="13" height="10" fill="#909098" stroke="#333"/></svg>
<svg class="ic" style="left:52px;top:480px" width="6" height="4" viewBox="0 0 6 4"><path d="M0 0h5l-2.5 3z" fill="#000"/></svg>
<svg class="ic" style="left:31px;top:495px" width="18" height="18" viewBox="0 0 18 18"><path d="M3 16V10h12v6" fill="none" stroke="#555" stroke-width="1.2"/><path d="M9 3v6M6.5 4.5l5 3M11.5 4.5l-5 3" stroke="#333" stroke-width="1.2"/></svg>
<svg class="ic" style="left:52px;top:503px" width="6" height="4" viewBox="0 0 6 4"><path d="M0 0h5l-2.5 3z" fill="#000"/></svg>
<svg class="ic" style="left:31px;top:518px" width="18" height="18" viewBox="0 0 18 18"><path d="M4 10.5V7a1 1 0 012 0v2.5V3.5a1 1 0 012 0V9V2.5a1 1 0 012 0V9V4a1 1 0 012 0v7c0 3-1.5 5-4 5H8c-2 0-3-1-4.5-3L1.5 10a1 1 0 011.5-1.2z" fill="#fff" stroke="#000" stroke-width="1"/></svg>
<svg class="ic" style="left:31px;top:541px" width="18" height="18" viewBox="0 0 18 18"><path d="M0 9l2.5-1 2.5 7 4-14h9" fill="none" stroke="#1030d0" stroke-width="2.2"/><path d="M15.5 8a3.5 4 0 10 0 6.5M15.5 7v8.5" fill="none" stroke="#1030d0" stroke-width="2.2"/></svg>
<svg class="ic" style="left:52px;top:549px" width="6" height="4" viewBox="0 0 6 4"><path d="M0 0h5l-2.5 3z" fill="#000"/></svg>
<svg class="ic" style="left:31px;top:564px" width="18" height="18" viewBox="0 0 18 18"><path d="M1.5 1.5h10l4 4v11h-14z" fill="#fff" stroke="#000" stroke-width="1.1"/><path d="M3.5 5v9h10" fill="none" stroke="#000"/><path d="M4.5 12l2.5-3 2 1.5 3-4" fill="none" stroke="#e00" stroke-width="1.2"/></svg>
<svg class="ic" style="left:52px;top:572px" width="6" height="4" viewBox="0 0 6 4"><path d="M0 0h5l-2.5 3z" fill="#000"/></svg>
<svg class="ic" style="left:31px;top:587px" width="18" height="18" viewBox="0 0 18 18"><g transform="translate(0,-1) scale(.8)"><path d="M4 10.5V7a1 1 0 012 0v2.5V3.5a1 1 0 012 0V9V2.5a1 1 0 012 0V9V4a1 1 0 012 0v7c0 3-1.5 5-4 5H8c-2 0-3-1-4.5-3L1.5 10a1 1 0 011.5-1.2z" fill="#fff" stroke="#000" stroke-width="1"/></g><path d="M1 15.5h16M14 1v17M4 13v4M8 13v4" stroke="#000" stroke-width="1.1"/></svg>
<svg class="ic" style="left:31px;top:610px" width="18" height="18" viewBox="0 0 18 18"><path d="M6 5l4-3h6v12l-4 3H6z" fill="#e00" stroke="#200" stroke-width="1"/><path d="M12 5h-6M12 5l4-3M12 5v12" fill="none" stroke="#200" stroke-width="1"/><path d="M4 7c-3 0-3 5 0 5h6M8 9.5l3 2.5-3 2.5" fill="none" stroke="#1030e0" stroke-width="2"/></svg>
<svg class="ic" style="left:50px;top:633px" width="8" height="9" viewBox="0 0 8 9"><path d="M1 1v7M3 1l4 3.5L3 8z" fill="#000" stroke="#000" stroke-width=".7"/></svg>
<svg class="ic" style="left:30px;top:657px" width="18" height="18" viewBox="0 0 18 18"><rect x="1" y="1" width="16" height="3" fill="#e00"/><rect x="1" y="5.5" width="16" height="3" fill="#f0e000"/><rect x="1" y="10" width="16" height="3" fill="#1030d0"/><rect x="1" y="14.5" width="16" height="3" fill="#10a010"/></svg>
<svg class="ic" style="left:30px;top:681px" width="18" height="18" viewBox="0 0 18 18"><circle cx="9" cy="9" r="7.5" fill="none" stroke="#777"/><circle cx="9" cy="10" r="4" fill="none" stroke="#777"/><path d="M5 15h8" stroke="#777"/></svg>
<svg class="ic" style="left:30px;top:704px" width="18" height="18" viewBox="0 0 18 18"><path d="M9 1v16M5 3h8M5 15h8" stroke="#888" stroke-width="1.2"/><rect x="3.5" y="7.5" width="11" height="4" fill="none" stroke="#888"/></svg>
<svg class="ic" style="left:30px;top:727px" width="18" height="18" viewBox="0 0 18 18"><rect x="2.5" y="1.5" width="13" height="15" fill="#fff" stroke="#000"/><text x="9" y="8" font-size="7" font-family="Liberation Sans" font-weight="bold">B</text><text x="9" y="15" font-size="7" font-family="Liberation Sans" font-weight="bold">C</text><path d="M4 5h4M4 12h4" stroke="#1030d0"/></svg>
<svg class="ic" style="left:30px;top:764px" width="8" height="9" viewBox="0 0 8 9"><path d="M1 2l2.5 2 2.5-2M1 5l2.5 2 2.5-2" fill="none" stroke="#000"/></svg>
<svg class="ic" style="left:44px;top:763px" width="8" height="9" viewBox="0 0 8 9"><path d="M1 1v7M3 1l4 3.5L3 8z" fill="#000" stroke="#000" stroke-width=".7"/></svg>
<svg class="ic" style="left:44px;top:799px" width="8" height="9" viewBox="0 0 8 9"><path d="M1 1v7M3 1l4 3.5L3 8z" fill="#000" stroke="#000" stroke-width=".7"/></svg>
<!-- workspace -->
<div class="a" style="left:63px;top:162px;width:847px;height:619px;background:#ababab;border-top:1px solid #8c8c8c;border-left:1px solid #8c8c8c"></div>
<div class="a" style="left:76px;top:177px;width:786px;height:561px;background:#5a8bd4;border:1px solid #686e78;border-radius:6px 6px 0 0"></div>
<svg class="ic" style="left:87px;top:189px" width="19" height="19" viewBox="0 0 19 19"><rect x="0.5" y="0.5" width="17" height="17" fill="#d8d0d0" stroke="#333"/><rect x="2" y="2" width="14" height="14" fill="#30e0e8"/><path d="M3 6c3-2 4 0 6-1s3-1 6 0M3 11c3-1 6-2 12 0" stroke="#606070" fill="none"/><path d="M2 16h14" stroke="#e04040" stroke-dasharray="1 1"/><rect x="1.5" y="18" width="17" height="1" fill="#444"/></svg>
<div class="t" style="left:111px;top:193px;font-size:16px">Graph1 *</div>
<div class="a" style="left:742px;top:194px;width:14px;height:3px;background:#000"></div>
<div class="a" style="left:788px;top:191px;width:12px;height:11px;border:2.5px solid #000"></div>
<svg class="ic" style="left:831px;top:188px" width="16" height="16"><path d="M2 2L14 14M14 2L2 14" stroke="#000" stroke-width="3"/></svg>
<div class="a" style="left:85px;top:215px;width:768px;height:514px;background:#c0c0c0;border-top:2px solid #848280;border-left:2px solid #848280;border-right:2px solid #fff;border-bottom:2px solid #fff"></div>
<div class="a" style="left:87px;top:217px;width:718px;height:510px;background:#fff"></div>
<div class="a" style="left:87px;top:217px;width:25px;height:25px;background:#6a9bd0;border:1px solid #a8a8a8"></div>
<svg class="ic" style="left:94px;top:221px" width="12" height="17"><path d="M4.5 1.5h3v14h-3V5.5L1.5 7V4.2z" fill="#fff"/></svg>
<div class="a" style="left:646px;top:245px;width:77px;height:46px;background:#fff;border:1px solid #333"></div>
<div class="a" style="left:649px;top:248.0px;width:27px;height:13.5px;background:#ff0000;border:1px solid #909090"></div>
<div class="t" style="left:681px;top:248.5px;font-size:13.5px;color:#222;font-family:'Liberation Serif',serif">2022年</div>
<div class="a" style="left:649px;top:262.6px;width:27px;height:13.5px;background:#00ff00;border:1px solid #909090"></div>
<div class="t" style="left:681px;top:263.1px;font-size:13.5px;color:#222;font-family:'Liberation Serif',serif">2023年</div>
<div class="a" style="left:649px;top:277.2px;width:27px;height:13.5px;background:#0000ff;border:1px solid #909090"></div>
<div class="t" style="left:681px;top:277.7px;font-size:13.5px;color:#222;font-family:'Liberation Serif',serif">2024年</div>
<svg width="1143" height="842" style="position:absolute;left:0;top:0"><defs><linearGradient id="gb0" gradientUnits="userSpaceOnUse" x1="399.2" y1="0" x2="426.1" y2="0"><stop offset="0" stop-color="#0000f0"/><stop offset="0.1" stop-color="#0000ff"/><stop offset="0.62" stop-color="#0000ff"/><stop offset="0.92" stop-color="#0000a0"/><stop offset="1" stop-color="#0000a0"/></linearGradient><linearGradient id="gb1" gradientUnits="userSpaceOnUse" x1="427.5" y1="0" x2="454.9" y2="0"><stop offset="0" stop-color="#0000f0"/><stop offset="0.1" stop-color="#0000ff"/><stop offset="0.62" stop-color="#0000ff"/><stop offset="0.92" stop-color="#0000a0"/><stop offset="1" stop-color="#0000a0"/></linearGradient><linearGradient id="gb2" gradientUnits="userSpaceOnUse" x1="456.8" y1="0" x2="484.8" y2="0"><stop offset="0" stop-color="#0000f0"/><stop offset="0.1" stop-color="#0000ff"/><stop offset="0.62" stop-color="#0000ff"/><stop offset="0.92" stop-color="#0000a0"/><stop offset="1" stop-color="#0000a0"/></linearGradient><linearGradient id="gb3" gradientUnits="userSpaceOnUse" x1="487.4" y1="0" x2="516.0" y2="0"><stop offset="0" stop-color="#0000f0"/><stop offset="0.1" stop-color="#0000ff"/><stop offset="0.62" stop-color="#0000ff"/><stop offset="0.92" stop-color="#0000a0"/><stop offset="1" stop-color="#0000a0"/></linearGradient><linearGradient id="gb4" gradientUnits="userSpaceOnUse" x1="519.3" y1="0" x2="548.4" y2="0"><stop offset="0" stop-color="#0000f0"/><stop offset="0.1" stop-color="#0000ff"/><stop offset="0.62" stop-color="#0000ff"/><stop offset="0.92" stop-color="#0000a0"/><stop offset="1" stop-color="#0000a0"/></linearGradient><linearGradient id="gb5" gradientUnits="userSpaceOnUse" x1="552.5" y1="0" x2="582.3" y2="0"><stop offset="0" stop-color="#0000f0"/><stop offset="0.1" stop-color="#0000ff"/><stop offset="0.62" stop-color="#0000ff"/><stop offset="0.92" stop-color="#0000a0"/><stop offset="1" stop-color="#0000a0"/></linearGradient><linearGradient id="gg0" gradientUnits="userSpaceOnUse" x1="336.6" y1="0" x2="364.8" y2="0"><stop offset="0" stop-color="#00f000"/><stop offset="0.1" stop-color="#00ff00"/><stop offset="0.62" stop-color="#00ff00"/><stop offset="0.92" stop-color="#00a000"/><stop offset="1" stop-color="#00a000"/></linearGradient><linearGradient id="gg1" gradientUnits="userSpaceOnUse" x1="364.8" y1="0" x2="393.5" y2="0"><stop offset="0" stop-color="#00f000"/><stop offset="0.1" stop-color="#00ff00"/><stop offset="0.62" stop-color="#00ff00"/><stop offset="0.92" stop-color="#00a000"/><stop offset="1" stop-color="#00a000"/></linearGradient><linearGradient id="gg2" gradientUnits="userSpaceOnUse" x1="394.2" y1="0" x2="423.4" y2="0"><stop offset="0" stop-color="#00f000"/><stop offset="0.1" stop-color="#00ff00"/><stop offset="0.62" stop-color="#00ff00"/><stop offset="0.92" stop-color="#00a000"/><stop offset="1" stop-color="#00a000"/></linearGradient><linearGradient id="gg3" gradientUnits="userSpaceOnUse" x1="424.8" y1="0" x2="454.6" y2="0"><stop offset="0" stop-color="#00f000"/><stop offset="0.1" stop-color="#00ff00"/><stop offset="0.62" stop-color="#00ff00"/><stop offset="0.92" stop-color="#00a000"/><stop offset="1" stop-color="#00a000"/></linearGradient><linearGradient id="gg4" gradientUnits="userSpaceOnUse" x1="456.7" y1="0" x2="487.2" y2="0"><stop offset="0" stop-color="#00f000"/><stop offset="0.1" stop-color="#00ff00"/><stop offset="0.62" stop-color="#00ff00"/><stop offset="0.92" stop-color="#00a000"/><stop offset="1" stop-color="#00a000"/></linearGradient><linearGradient id="gg5" gradientUnits="userSpaceOnUse" x1="490.0" y1="0" x2="521.2" y2="0"><stop offset="0" stop-color="#00f000"/><stop offset="0.1" stop-color="#00ff00"/><stop offset="0.62" stop-color="#00ff00"/><stop offset="0.92" stop-color="#00a000"/><stop offset="1" stop-color="#00a000"/></linearGradient><linearGradient id="gr0" gradientUnits="userSpaceOnUse" x1="268.7" y1="0" x2="298.2" y2="0"><stop offset="0" stop-color="#f00000"/><stop offset="0.1" stop-color="#ff0000"/><stop offset="0.62" stop-color="#ff0000"/><stop offset="0.92" stop-color="#a00000"/><stop offset="1" stop-color="#a00000"/></linearGradient><linearGradient id="gr1" gradientUnits="userSpaceOnUse" x1="296.7" y1="0" x2="326.7" y2="0"><stop offset="0" stop-color="#f00000"/><stop offset="0.1" stop-color="#ff0000"/><stop offset="0.62" stop-color="#ff0000"/><stop offset="0.92" stop-color="#a00000"/><stop offset="1" stop-color="#a00000"/></linearGradient><linearGradient id="gr2" gradientUnits="userSpaceOnUse" x1="325.9" y1="0" x2="356.5" y2="0"><stop offset="0" stop-color="#f00000"/><stop offset="0.1" stop-color="#ff0000"/><stop offset="0.62" stop-color="#ff0000"/><stop offset="0.92" stop-color="#a00000"/><stop offset="1" stop-color="#a00000"/></linearGradient><linearGradient id="gr3" gradientUnits="userSpaceOnUse" x1="356.4" y1="0" x2="387.6" y2="0"><stop offset="0" stop-color="#f00000"/><stop offset="0.1" stop-color="#ff0000"/><stop offset="0.62" stop-color="#ff0000"/><stop offset="0.92" stop-color="#a00000"/><stop offset="1" stop-color="#a00000"/></linearGradient><linearGradient id="gr4" gradientUnits="userSpaceOnUse" x1="388.2" y1="0" x2="420.1" y2="0"><stop offset="0" stop-color="#f00000"/><stop offset="0.1" stop-color="#ff0000"/><stop offset="0.62" stop-color="#ff0000"/><stop offset="0.92" stop-color="#a00000"/><stop offset="1" stop-color="#a00000"/></linearGradient><linearGradient id="gr5" gradientUnits="userSpaceOnUse" x1="421.6" y1="0" x2="454.2" y2="0"><stop offset="0" stop-color="#f00000"/><stop offset="0.1" stop-color="#ff0000"/><stop offset="0.62" stop-color="#ff0000"/><stop offset="0.92" stop-color="#a00000"/><stop offset="1" stop-color="#a00000"/></linearGradient></defs><g stroke="#d6d6d6" stroke-width="1"><line x1="247.6" y1="573.7" x2="441.9" y2="473.1"/><line x1="275.7" y1="593.6" x2="470.4" y2="488.8"/><line x1="305.1" y1="614.5" x2="500.0" y2="505.1"/><line x1="335.8" y1="636.3" x2="530.8" y2="522.0"/><line x1="367.9" y1="659.2" x2="562.9" y2="539.7"/><line x1="401.6" y1="683.1" x2="596.3" y2="558.0"/><line x1="269.8" y1="545.8" x2="455.3" y2="671.6"/><line x1="336.9" y1="511.7" x2="523.0" y2="627.1"/><line x1="398.8" y1="480.3" x2="584.7" y2="586.5"/></g><polygon points="234.0,564.0 419.0,695.5 613.5,567.5 428.0,465.5" fill="none" stroke="#111" stroke-width="1.3" stroke-linejoin="miter"/><g stroke="#111" stroke-width="1.2"><line x1="261.5" y1="583.6" x2="258.9" y2="585.0"/><line x1="290.2" y1="604.0" x2="287.6" y2="605.4"/><line x1="320.2" y1="625.3" x2="317.6" y2="626.8"/><line x1="351.6" y1="647.6" x2="349.0" y2="649.2"/><line x1="384.5" y1="671.0" x2="381.8" y2="672.7"/><line x1="247.6" y1="573.7" x2="242.1" y2="576.5"/><line x1="275.7" y1="593.6" x2="270.2" y2="596.6"/><line x1="305.1" y1="614.5" x2="299.5" y2="617.6"/><line x1="335.8" y1="636.3" x2="330.2" y2="639.6"/><line x1="367.9" y1="659.2" x2="362.3" y2="662.6"/><line x1="401.6" y1="683.1" x2="396.0" y2="686.7"/><line x1="490.0" y1="648.8" x2="492.5" y2="650.4"/><line x1="554.5" y1="606.3" x2="557.1" y2="607.8"/><line x1="455.3" y1="671.6" x2="460.7" y2="675.2"/><line x1="523.0" y1="627.1" x2="528.3" y2="630.3"/><line x1="584.7" y1="586.5" x2="589.9" y2="589.5"/><line x1="234.0" y1="564.0" x2="227.4" y2="567.4"/><line x1="419.0" y1="695.5" x2="412.3" y2="699.9"/><line x1="419.0" y1="695.5" x2="425.4" y2="700.0"/><line x1="613.5" y1="567.5" x2="619.8" y2="571.0"/></g><g font-family="Liberation Serif" fill="#3a3a3a"><text transform="matrix(0.9440 -0.4873 0.6980 0.5022 236.6 576.9)" x="0" y="3.78" text-anchor="middle" font-size="10.5">F</text><text transform="matrix(0.9486 -0.5095 0.7289 0.5245 264.5 597.1)" x="0" y="3.78" text-anchor="middle" font-size="10.5">E</text><text transform="matrix(0.9527 -0.5332 0.7619 0.5482 293.8 618.1)" x="0" y="3.78" text-anchor="middle" font-size="10.5">D</text><text transform="matrix(0.9562 -0.5587 0.7972 0.5736 324.3 640.1)" x="0" y="3.78" text-anchor="middle" font-size="10.5">C</text><text transform="matrix(0.9590 -0.5859 0.8351 0.6008 356.3 663.1)" x="0" y="3.78" text-anchor="middle" font-size="10.5">B</text><text transform="matrix(0.9609 -0.6151 0.8756 0.6300 389.9 687.2)" x="0" y="3.78" text-anchor="middle" font-size="10.5">A</text><text transform="matrix(0.9656 -0.5473 0.7711 0.5622 292.7 630.1)" x="0" y="4.2" text-anchor="middle" font-size="10.5">产</text><text transform="matrix(0.9657 -0.5564 0.7849 0.5714 305.6 638.0)" x="0" y="4.2" text-anchor="middle" font-size="10.5">品</text><text transform="matrix(0.9081 0.6153 -0.9043 0.6004 461.7 675.9)" x="0" y="3.78" text-anchor="start" font-size="10.5">2022年</text><text transform="matrix(0.9049 0.5608 -0.8222 0.5459 529.4 631.0)" x="0" y="3.78" text-anchor="start" font-size="10.5">2023年</text><text transform="matrix(0.8987 0.5134 -0.7509 0.4985 591.0 590.1)" x="0" y="3.78" text-anchor="start" font-size="10.5">2024年</text></g><polygon points="399.2,488.5 399.2,488.0 410.3,321.1 426.1,488.0 426.1,488.5 426.1,489.0 425.9,489.5 425.7,490.0 425.5,490.5 425.1,491.0 424.8,491.4 424.3,491.9 423.8,492.3 423.2,492.8 422.6,493.1 422.0,493.5 421.3,493.9 420.5,494.2 419.7,494.5 418.9,494.7 418.0,495.0 417.1,495.2 416.2,495.3 415.3,495.4 414.4,495.5 413.4,495.6 412.5,495.6 411.6,495.6 410.6,495.5 409.7,495.4 408.8,495.3 407.9,495.2 407.0,495.0 406.1,494.7 405.3,494.5 404.6,494.2 403.8,493.9 403.1,493.5 402.5,493.1 401.9,492.8 401.4,492.3 400.9,491.9 400.4,491.4 400.1,491.0 399.8,490.5 399.5,490.0 399.4,489.5 399.2,489.0" fill="url(#gb0)" stroke="#777" stroke-opacity="0.35" stroke-width="0.7"/><polygon points="427.5,504.8 427.5,504.2 441.3,312.1 454.9,504.2 454.9,504.8 454.9,505.3 454.7,505.8 454.6,506.4 454.3,506.9 454.0,507.4 453.6,507.9 453.2,508.3 452.7,508.8 452.1,509.2 451.5,509.6 450.8,510.0 450.1,510.4 449.4,510.7 448.6,511.0 447.8,511.3 446.9,511.5 446.0,511.7 445.1,511.9 444.1,512.0 443.2,512.1 442.2,512.2 441.3,512.2 440.3,512.2 439.3,512.1 438.4,512.0 437.4,511.9 436.5,511.7 435.6,511.5 434.8,511.3 433.9,511.0 433.1,510.7 432.4,510.4 431.6,510.0 431.0,509.6 430.4,509.2 429.8,508.8 429.3,508.3 428.8,507.9 428.4,507.4 428.1,506.9 427.9,506.4 427.7,505.8 427.5,505.3" fill="url(#gb1)" stroke="#777" stroke-opacity="0.35" stroke-width="0.7"/><polygon points="456.8,521.2 456.9,520.6 472.4,385.2 484.8,521.2 484.8,521.7 484.8,522.3 484.7,522.8 484.5,523.4 484.3,523.9 484.0,524.4 483.6,524.9 483.2,525.4 482.7,525.9 482.1,526.4 481.6,526.8 480.9,527.2 480.2,527.6 479.4,527.9 478.6,528.2 477.8,528.5 476.9,528.8 476.0,529.0 475.1,529.1 474.1,529.3 473.2,529.4 472.2,529.4 471.2,529.5 470.2,529.4 469.2,529.4 468.3,529.3 467.3,529.1 466.4,529.0 465.4,528.8 464.5,528.5 463.7,528.2 462.8,527.9 462.1,527.6 461.3,527.2 460.6,526.8 460.0,526.4 459.4,525.9 458.8,525.4 458.4,524.9 457.9,524.4 457.6,523.9 457.3,523.4 457.1,522.8 456.9,522.3 456.9,521.7" fill="url(#gb2)" stroke="#777" stroke-opacity="0.35" stroke-width="0.7"/><polygon points="487.4,538.8 487.4,538.2 506.6,380.5 516.0,539.4 516.0,539.9 515.9,540.5 515.7,541.1 515.5,541.6 515.2,542.2 514.9,542.7 514.5,543.2 514.0,543.7 513.4,544.2 512.8,544.6 512.2,545.1 511.4,545.5 510.7,545.8 509.9,546.1 509.1,546.4 508.2,546.7 507.3,546.9 506.3,547.1 505.4,547.2 504.4,547.3 503.4,547.4 502.4,547.4 501.4,547.4 500.4,547.3 499.4,547.2 498.4,547.1 497.4,546.9 496.5,546.7 495.5,546.4 494.6,546.1 493.8,545.8 493.0,545.5 492.2,545.1 491.5,544.6 490.8,544.2 490.2,543.7 489.6,543.2 489.1,542.7 488.7,542.2 488.3,541.6 488.0,541.1 487.7,540.5 487.6,540.0 487.4,539.4" fill="url(#gb3)" stroke="#777" stroke-opacity="0.35" stroke-width="0.7"/><polygon points="519.3,557.2 519.3,556.6 542.5,368.5 548.4,557.7 548.4,558.3 548.4,558.9 548.2,559.5 548.0,560.1 547.8,560.7 547.4,561.2 547.0,561.8 546.5,562.3 546.0,562.8 545.4,563.2 544.8,563.7 544.0,564.1 543.3,564.5 542.5,564.8 541.6,565.1 540.7,565.4 539.8,565.6 538.9,565.8 537.9,566.0 536.9,566.1 535.9,566.1 534.9,566.1 533.8,566.1 532.8,566.1 531.8,566.0 530.8,565.8 529.8,565.6 528.8,565.4 527.8,565.1 526.9,564.8 526.0,564.5 525.2,564.1 524.4,563.7 523.6,563.3 522.9,562.8 522.3,562.3 521.7,561.8 521.1,561.2 520.7,560.7 520.3,560.1 519.9,559.5 519.7,559.0 519.5,558.4 519.3,557.8" fill="url(#gb4)" stroke="#777" stroke-opacity="0.35" stroke-width="0.7"/><polygon points="552.5,575.7 552.5,575.0 581.1,356.0 582.3,577.5 582.3,578.1 582.1,578.8 582.0,579.4 581.7,580.0 581.4,580.5 581.0,581.1 580.5,581.6 580.0,582.1 579.4,582.6 578.7,583.1 578.0,583.5 577.3,583.9 576.5,584.3 575.6,584.6 574.7,584.9 573.8,585.1 572.8,585.3 571.8,585.5 570.8,585.6 569.8,585.6 568.7,585.7 567.7,585.7 566.6,585.6 565.6,585.5 564.5,585.3 563.5,585.1 562.5,584.9 561.5,584.6 560.6,584.3 559.7,583.9 558.8,583.5 558.0,583.1 557.2,582.7 556.4,582.2 555.7,581.7 555.1,581.1 554.5,580.6 554.0,580.0 553.6,579.4 553.2,578.8 552.9,578.2 552.7,577.6 552.5,576.9 552.5,576.3" fill="url(#gb5)" stroke="#777" stroke-opacity="0.35" stroke-width="0.7"/><path d="M410.3,321.1 L411.6,319.6 L412.9,318.1 L414.2,316.6 L415.5,315.2 L416.8,313.8 L418.1,312.4 L419.4,311.2 L420.7,310.0 L422.0,308.9 L423.3,307.9 L424.6,307.0 L425.9,306.3 L427.2,305.7 L428.5,305.3 L429.7,305.0 L431.0,304.9 L432.3,305.0 L433.6,305.3 L434.9,305.9 L436.2,306.6 L437.5,307.6 L438.7,308.8 L440.0,310.3 L441.3,312.1 L442.6,314.2 L443.9,316.5 L445.1,319.0 L446.4,321.8 L447.7,324.7 L448.9,327.9 L450.2,331.1 L451.5,334.5 L452.8,338.0 L454.0,341.5 L455.3,345.1 L456.6,348.7 L457.9,352.4 L459.2,355.9 L460.5,359.5 L461.8,363.0 L463.1,366.3 L464.4,369.6 L465.7,372.7 L467.0,375.6 L468.4,378.4 L469.7,380.9 L471.0,383.2 L472.4,385.2 L473.8,386.9 L475.1,388.4 L476.5,389.6 L477.9,390.6 L479.3,391.3 L480.7,391.8 L482.1,392.1 L483.5,392.3 L484.9,392.2 L486.3,392.0 L487.7,391.7 L489.2,391.2 L490.6,390.6 L492.1,389.9 L493.5,389.1 L494.9,388.2 L496.4,387.3 L497.8,386.4 L499.3,385.4 L500.8,384.4 L502.2,383.4 L503.7,382.4 L505.1,381.4 L506.6,380.5 L508.1,379.6 L509.5,378.8 L511.0,378.1 L512.5,377.3 L513.9,376.7 L515.4,376.1 L516.9,375.5 L518.3,374.9 L519.8,374.4 L521.3,373.9 L522.8,373.4 L524.3,373.0 L525.8,372.6 L527.3,372.2 L528.8,371.8 L530.3,371.4 L531.8,371.1 L533.3,370.7 L534.8,370.4 L536.3,370.0 L537.9,369.6 L539.4,369.3 L541.0,368.9 L542.5,368.5 L544.1,368.1 L545.6,367.7 L547.2,367.2 L548.8,366.8 L550.3,366.3 L551.9,365.9 L553.5,365.4 L555.1,364.9 L556.7,364.4 L558.3,363.9 L559.9,363.3 L561.6,362.8 L563.2,362.3 L564.8,361.7 L566.4,361.2 L568.0,360.6 L569.7,360.0 L571.3,359.5 L572.9,358.9 L574.6,358.3 L576.2,357.7 L577.8,357.2 L579.5,356.6 L581.1,356.0" fill="none" stroke="#0000ff" stroke-width="3" stroke-linejoin="round"/><polygon points="336.6,520.6 346.7,409.7 364.7,518.9 364.8,519.5 364.8,520.0 364.7,520.6 364.6,521.1 364.4,521.7 364.2,522.2 363.9,522.7 363.5,523.3 363.1,523.8 362.6,524.3 362.0,524.7 361.4,525.2 360.7,525.6 360.0,526.0 359.2,526.4 358.4,526.8 357.6,527.1 356.7,527.4 355.8,527.6 354.8,527.8 353.9,528.0 352.9,528.1 351.9,528.2 350.9,528.3 349.9,528.3 348.9,528.3 348.0,528.2 347.0,528.1 346.1,528.0 345.1,527.8 344.2,527.6 343.4,527.4 342.6,527.1 341.8,526.8 341.0,526.4 340.3,526.0 339.7,525.6 339.1,525.2 338.6,524.8 338.1,524.3 337.7,523.8 337.4,523.3 337.1,522.8 336.9,522.2 336.7,521.7 336.7,521.1" fill="url(#gg0)" stroke="#777" stroke-opacity="0.35" stroke-width="0.7"/><polygon points="364.8,538.2 364.9,537.6 375.3,417.8 393.4,537.0 393.5,537.6 393.5,538.2 393.4,538.8 393.2,539.4 393.0,539.9 392.7,540.5 392.3,541.0 391.9,541.5 391.4,542.1 390.8,542.5 390.2,543.0 389.5,543.5 388.8,543.9 388.0,544.3 387.2,544.6 386.4,545.0 385.5,545.3 384.6,545.5 383.6,545.8 382.6,545.9 381.7,546.1 380.7,546.2 379.6,546.2 378.6,546.3 377.6,546.2 376.6,546.2 375.6,546.1 374.7,545.9 373.7,545.8 372.8,545.5 371.9,545.3 371.1,545.0 370.3,544.7 369.5,544.3 368.8,543.9 368.1,543.5 367.5,543.0 366.9,542.6 366.4,542.1 366.0,541.6 365.6,541.0 365.3,540.5 365.1,539.9 364.9,539.4 364.9,538.8" fill="url(#gg1)" stroke="#777" stroke-opacity="0.35" stroke-width="0.7"/><polygon points="394.2,556.6 394.2,556.0 406.6,457.4 423.3,555.4 423.4,556.0 423.4,556.6 423.3,557.2 423.2,557.8 422.9,558.4 422.7,558.9 422.3,559.5 421.9,560.1 421.4,560.6 420.8,561.1 420.2,561.6 419.6,562.1 418.8,562.5 418.1,562.9 417.3,563.3 416.4,563.6 415.5,564.0 414.6,564.2 413.6,564.5 412.6,564.6 411.6,564.8 410.6,564.9 409.6,565.0 408.6,565.0 407.5,565.0 406.5,564.9 405.5,564.8 404.5,564.6 403.5,564.5 402.6,564.2 401.7,564.0 400.8,563.7 399.9,563.3 399.1,562.9 398.4,562.5 397.7,562.1 397.1,561.6 396.5,561.1 395.9,560.6 395.5,560.1 395.1,559.5 394.8,559.0 394.5,558.4 394.3,557.8 394.2,557.2" fill="url(#gg2)" stroke="#777" stroke-opacity="0.35" stroke-width="0.7"/><polygon points="424.8,575.8 424.8,575.1 439.3,456.7 454.6,575.1 454.6,575.7 454.5,576.4 454.4,577.0 454.2,577.6 453.9,578.2 453.6,578.8 453.2,579.4 452.7,579.9 452.2,580.5 451.6,581.0 450.9,581.5 450.2,581.9 449.4,582.4 448.6,582.8 447.7,583.1 446.8,583.4 445.9,583.7 444.9,584.0 443.9,584.1 442.9,584.3 441.9,584.4 440.8,584.5 439.8,584.5 438.7,584.5 437.7,584.4 436.6,584.3 435.6,584.2 434.6,584.0 433.6,583.7 432.7,583.5 431.8,583.1 430.9,582.8 430.1,582.4 429.3,582.0 428.6,581.5 427.9,581.0 427.3,580.5 426.7,580.0 426.2,579.4 425.8,578.8 425.5,578.2 425.2,577.6 425.0,577.0 424.8,576.4" fill="url(#gg3)" stroke="#777" stroke-opacity="0.35" stroke-width="0.7"/><polygon points="456.7,595.1 456.7,594.5 473.0,490.3 487.1,595.0 487.2,595.7 487.1,596.4 487.0,597.0 486.8,597.7 486.6,598.3 486.2,598.9 485.9,599.5 485.4,600.1 484.8,600.7 484.2,601.2 483.6,601.7 482.9,602.2 482.1,602.6 481.3,603.0 480.4,603.4 479.5,603.8 478.6,604.0 477.6,604.3 476.6,604.5 475.5,604.7 474.5,604.8 473.4,604.9 472.3,604.9 471.2,604.9 470.2,604.8 469.1,604.7 468.1,604.5 467.0,604.3 466.0,604.1 465.1,603.8 464.1,603.5 463.2,603.1 462.4,602.7 461.6,602.2 460.8,601.8 460.1,601.2 459.4,600.7 458.9,600.1 458.3,599.6 457.9,599.0 457.5,598.3 457.2,597.7 457.0,597.1 456.8,596.4 456.7,595.8" fill="url(#gg4)" stroke="#777" stroke-opacity="0.35" stroke-width="0.7"/><polygon points="490.0,616.0 490.1,615.3 509.4,482.8 521.2,616.6 521.2,617.3 521.1,618.0 520.9,618.6 520.7,619.3 520.4,619.9 520.0,620.6 519.5,621.2 519.0,621.8 518.4,622.3 517.8,622.9 517.0,623.4 516.3,623.8 515.4,624.3 514.6,624.7 513.6,625.0 512.7,625.3 511.7,625.6 510.7,625.8 509.6,626.0 508.6,626.1 507.5,626.2 506.4,626.2 505.3,626.2 504.2,626.1 503.1,626.0 502.0,625.8 500.9,625.6 499.9,625.4 498.9,625.0 497.9,624.7 497.0,624.3 496.1,623.9 495.3,623.4 494.5,622.9 493.7,622.4 493.1,621.8 492.4,621.2 491.9,620.6 491.4,620.0 491.0,619.4 490.6,618.7 490.4,618.0 490.2,617.3 490.1,616.6" fill="url(#gg5)" stroke="#777" stroke-opacity="0.35" stroke-width="0.7"/><path d="M346.7,409.7 L347.9,409.5 L349.0,409.4 L350.2,409.2 L351.4,409.1 L352.5,409.0 L353.7,408.9 L354.9,408.8 L356.0,408.8 L357.2,408.8 L358.4,408.9 L359.6,409.0 L360.8,409.2 L362.0,409.4 L363.1,409.7 L364.3,410.1 L365.5,410.6 L366.7,411.1 L367.9,411.8 L369.2,412.5 L370.4,413.3 L371.6,414.3 L372.8,415.3 L374.1,416.5 L375.3,417.8 L376.5,419.2 L377.8,420.7 L379.1,422.4 L380.3,424.1 L381.6,425.9 L382.9,427.7 L384.2,429.7 L385.4,431.6 L386.7,433.6 L388.0,435.5 L389.3,437.5 L390.6,439.5 L392.0,441.4 L393.3,443.3 L394.6,445.2 L395.9,447.0 L397.2,448.7 L398.6,450.3 L399.9,451.8 L401.2,453.2 L402.6,454.5 L403.9,455.6 L405.3,456.6 L406.6,457.4 L407.9,458.0 L409.3,458.5 L410.6,458.8 L412.0,459.0 L413.4,459.1 L414.7,459.0 L416.1,458.9 L417.4,458.7 L418.8,458.4 L420.1,458.1 L421.5,457.7 L422.9,457.3 L424.2,457.0 L425.6,456.6 L427.0,456.2 L428.3,455.9 L429.7,455.7 L431.1,455.5 L432.4,455.4 L433.8,455.4 L435.2,455.5 L436.6,455.8 L437.9,456.2 L439.3,456.7 L440.7,457.4 L442.0,458.3 L443.4,459.3 L444.8,460.4 L446.2,461.7 L447.6,463.1 L448.9,464.5 L450.3,466.1 L451.7,467.7 L453.1,469.3 L454.5,471.0 L455.9,472.7 L457.3,474.4 L458.7,476.2 L460.1,477.9 L461.5,479.5 L462.9,481.2 L464.3,482.8 L465.8,484.3 L467.2,485.7 L468.6,487.0 L470.1,488.2 L471.5,489.3 L473.0,490.3 L474.5,491.1 L475.9,491.8 L477.4,492.3 L478.9,492.7 L480.4,493.0 L481.9,493.1 L483.4,493.2 L484.9,493.1 L486.4,493.0 L487.9,492.7 L489.4,492.4 L491.0,491.9 L492.5,491.4 L494.0,490.9 L495.5,490.3 L497.1,489.6 L498.6,488.8 L500.1,488.0 L501.7,487.2 L503.2,486.4 L504.8,485.5 L506.3,484.6 L507.9,483.7 L509.4,482.8" fill="none" stroke="#00ff00" stroke-width="3" stroke-linejoin="round"/><polygon points="268.7,556.0 268.7,555.4 278.0,468.0 298.0,553.0 298.1,553.6 298.2,554.2 298.2,554.8 298.1,555.4 297.9,556.0 297.7,556.6 297.4,557.2 297.0,557.8 296.6,558.3 296.0,558.9 295.5,559.4 294.9,559.9 294.2,560.4 293.4,560.9 292.6,561.3 291.8,561.8 290.9,562.1 290.0,562.5 289.1,562.8 288.1,563.0 287.1,563.3 286.1,563.5 285.1,563.6 284.0,563.7 283.0,563.8 282.0,563.8 280.9,563.8 279.9,563.7 278.9,563.6 277.9,563.5 277.0,563.3 276.1,563.1 275.2,562.8 274.4,562.5 273.6,562.1 272.8,561.8 272.1,561.4 271.5,560.9 270.9,560.5 270.4,560.0 269.9,559.5 269.6,558.9 269.2,558.4 269.0,557.8 268.8,557.2 268.7,556.6" fill="url(#gr0)" stroke="#777" stroke-opacity="0.35" stroke-width="0.7"/><polygon points="296.7,575.2 296.7,574.6 307.0,499.0 326.5,572.1 326.6,572.7 326.7,573.3 326.7,573.9 326.6,574.5 326.5,575.2 326.3,575.8 326.0,576.4 325.6,577.0 325.2,577.6 324.7,578.2 324.1,578.8 323.5,579.3 322.8,579.8 322.1,580.3 321.3,580.8 320.5,581.2 319.6,581.6 318.7,581.9 317.7,582.2 316.7,582.5 315.7,582.8 314.7,583.0 313.6,583.1 312.6,583.2 311.5,583.3 310.5,583.3 309.4,583.3 308.4,583.2 307.4,583.1 306.4,583.0 305.4,582.8 304.4,582.5 303.5,582.3 302.7,582.0 301.8,581.6 301.1,581.2 300.3,580.8 299.7,580.3 299.1,579.8 298.5,579.3 298.1,578.8 297.6,578.2 297.3,577.7 297.0,577.1 296.8,576.5 296.7,575.8" fill="url(#gr1)" stroke="#777" stroke-opacity="0.35" stroke-width="0.7"/><polygon points="325.9,594.6 325.9,593.9 338.0,533.0 356.2,591.9 356.4,592.6 356.5,593.2 356.5,593.9 356.4,594.5 356.3,595.2 356.1,595.8 355.8,596.5 355.5,597.1 355.1,597.7 354.6,598.3 354.0,598.9 353.4,599.5 352.7,600.0 352.0,600.5 351.2,601.0 350.4,601.5 349.5,601.9 348.6,602.2 347.6,602.6 346.6,602.9 345.6,603.1 344.5,603.3 343.5,603.5 342.4,603.6 341.3,603.7 340.2,603.7 339.2,603.7 338.1,603.6 337.1,603.5 336.0,603.4 335.0,603.2 334.0,602.9 333.1,602.6 332.2,602.3 331.4,601.9 330.6,601.5 329.8,601.1 329.1,600.6 328.5,600.1 327.9,599.5 327.4,599.0 327.0,598.4 326.6,597.8 326.3,597.2 326.1,596.5 325.9,595.9 325.9,595.2" fill="url(#gr2)" stroke="#777" stroke-opacity="0.35" stroke-width="0.7"/><polygon points="356.4,615.5 356.4,614.8 369.0,529.0 387.4,613.4 387.6,614.0 387.6,614.7 387.6,615.4 387.5,616.1 387.3,616.8 387.0,617.5 386.7,618.1 386.3,618.8 385.8,619.4 385.3,620.0 384.6,620.6 384.0,621.2 383.2,621.7 382.5,622.2 381.6,622.7 380.7,623.1 379.8,623.5 378.8,623.8 377.8,624.1 376.8,624.4 375.7,624.6 374.6,624.8 373.6,624.9 372.4,625.0 371.3,625.0 370.2,625.0 369.1,624.9 368.1,624.8 367.0,624.6 366.0,624.4 365.0,624.2 364.0,623.9 363.1,623.5 362.2,623.1 361.4,622.7 360.6,622.2 359.9,621.8 359.2,621.2 358.6,620.7 358.1,620.1 357.6,619.5 357.2,618.8 356.9,618.2 356.6,617.5 356.5,616.9 356.4,616.2" fill="url(#gr3)" stroke="#777" stroke-opacity="0.35" stroke-width="0.7"/><polygon points="388.2,637.3 388.2,636.6 388.4,635.9 402.0,561.0 419.9,635.1 420.1,635.8 420.1,636.5 420.1,637.2 420.1,638.0 419.9,638.7 419.6,639.4 419.3,640.1 418.9,640.8 418.5,641.4 417.9,642.0 417.3,642.7 416.7,643.3 415.9,643.8 415.1,644.3 414.3,644.8 413.4,645.3 412.5,645.7 411.5,646.1 410.5,646.4 409.4,646.7 408.3,646.9 407.2,647.1 406.1,647.2 405.0,647.3 403.9,647.3 402.8,647.3 401.6,647.2 400.5,647.1 399.4,646.9 398.4,646.7 397.4,646.4 396.4,646.1 395.4,645.7 394.5,645.3 393.6,644.9 392.8,644.4 392.0,643.9 391.3,643.3 390.7,642.7 390.1,642.1 389.6,641.5 389.2,640.8 388.9,640.1 388.6,639.5 388.4,638.8 388.3,638.0" fill="url(#gr4)" stroke="#777" stroke-opacity="0.35" stroke-width="0.7"/><polygon points="421.6,660.2 421.6,659.4 421.7,658.7 437.3,550.5 454.1,658.6 454.2,659.3 454.2,660.1 454.1,660.8 454.0,661.6 453.8,662.3 453.5,663.0 453.1,663.8 452.7,664.5 452.1,665.1 451.5,665.8 450.9,666.4 450.2,667.0 449.4,667.5 448.5,668.0 447.6,668.5 446.7,669.0 445.7,669.3 444.7,669.7 443.6,670.0 442.5,670.2 441.4,670.4 440.2,670.5 439.1,670.6 437.9,670.6 436.8,670.6 435.7,670.5 434.5,670.4 433.4,670.2 432.3,670.0 431.2,669.7 430.2,669.4 429.2,669.0 428.3,668.6 427.4,668.1 426.5,667.6 425.7,667.1 425.0,666.5 424.3,665.9 423.7,665.2 423.2,664.5 422.7,663.9 422.3,663.1 422.0,662.4 421.8,661.7 421.6,660.9" fill="url(#gr5)" stroke="#777" stroke-opacity="0.35" stroke-width="0.7"/><path d="M278.0,468.0 L279.2,469.1 L280.4,470.2 L281.6,471.3 L282.7,472.4 L283.9,473.6 L285.1,474.7 L286.3,475.9 L287.5,477.0 L288.7,478.2 L289.9,479.4 L291.1,480.6 L292.3,481.8 L293.5,483.1 L294.7,484.4 L295.9,485.7 L297.1,487.0 L298.3,488.4 L299.6,489.8 L300.8,491.2 L302.0,492.7 L303.3,494.2 L304.5,495.8 L305.7,497.4 L307.0,499.0 L308.3,500.7 L309.5,502.4 L310.8,504.2 L312.1,505.9 L313.3,507.7 L314.6,509.5 L315.9,511.3 L317.2,513.0 L318.5,514.8 L319.8,516.5 L321.1,518.2 L322.4,519.9 L323.7,521.4 L325.0,523.0 L326.3,524.4 L327.6,525.8 L328.9,527.1 L330.2,528.3 L331.5,529.4 L332.8,530.4 L334.1,531.2 L335.4,532.0 L336.7,532.5 L338.0,533.0 L339.3,533.3 L340.6,533.5 L341.9,533.5 L343.2,533.4 L344.4,533.2 L345.7,533.0 L347.0,532.7 L348.3,532.3 L349.6,531.8 L350.9,531.4 L352.1,530.9 L353.4,530.4 L354.7,529.9 L356.0,529.4 L357.3,529.0 L358.6,528.6 L359.9,528.3 L361.2,528.1 L362.5,527.9 L363.8,527.9 L365.1,528.0 L366.4,528.2 L367.7,528.5 L369.0,529.0 L370.3,529.7 L371.6,530.5 L373.0,531.5 L374.3,532.6 L375.7,533.8 L377.0,535.1 L378.3,536.5 L379.7,538.0 L381.1,539.5 L382.4,541.1 L383.8,542.7 L385.2,544.4 L386.5,546.0 L387.9,547.7 L389.3,549.3 L390.7,550.9 L392.1,552.5 L393.5,554.0 L394.9,555.4 L396.3,556.8 L397.7,558.0 L399.1,559.1 L400.6,560.1 L402.0,561.0 L403.4,561.7 L404.9,562.3 L406.3,562.7 L407.8,563.0 L409.2,563.2 L410.7,563.2 L412.1,563.1 L413.6,562.9 L415.1,562.7 L416.5,562.3 L418.0,561.8 L419.5,561.3 L421.0,560.6 L422.4,559.9 L423.9,559.2 L425.4,558.4 L426.9,557.5 L428.4,556.6 L429.9,555.6 L431.3,554.6 L432.8,553.6 L434.3,552.6 L435.8,551.5 L437.3,550.5" fill="none" stroke="#ff0000" stroke-width="3" stroke-linejoin="round"/></svg>
<div class="t" style="left:825px;top:745px;font-size:20px;color:#1a73e8;text-decoration:underline"><span style="letter-spacing:4px">&gt;&gt;</span>反馈</div>
<div class="a" style="left:910px;top:161px;width:26px;height:406px;background:linear-gradient(90deg,#c4c6d6 0%,#eceef6 12%,#eef0f8 35%,#d6d8e5 70%,#b4b7cb 100%);border-radius:5px 6px 6px 0;box-shadow:-1px 0 0 #fff"></div>
<div class="a" style="left:913px;top:166px;width:18px;height:2px;background:repeating-linear-gradient(90deg,#9a9cae 0 2px,transparent 2px 4px)"></div>
<div class="a" style="left:910px;top:569px;width:34px;height:244px;background:linear-gradient(90deg,#c4c6d6 0%,#eceef6 12%,#eef0f8 35%,#d6d8e5 70%,#b4b7cb 100%);border-radius:5px 6px 6px 0;box-shadow:-1px 0 0 #fff"></div>
<div class="a" style="left:914px;top:574px;width:24px;height:2px;background:repeating-linear-gradient(90deg,#9a9cae 0 2px,transparent 2px 4px)"></div>
<div class="a" style="left:911px;top:172px;width:23px;height:23px;border:1px solid #3c8ee0;background:#d6e6f8"></div>
<div class="a" style="left:911px;top:287px;width:23px;height:23px;border:1px solid #3c8ee0;background:#d6e6f8"></div>
<svg class="ic" style="left:913px;top:172px" width="18" height="18" viewBox="0 0 18 18"><path d="M1 12h4v2.5H1zM5 10h4v2.5H5zM9 8h4v2.5H9zM13 6h3.5v2.5H13zM1 6h4v2.5H1zM5 4h4v2.5H5zM12 2h4v2.5h-4z" fill="#60606e"/><path d="M5 14h3M9 12h3M12 10h3" stroke="#c0c0cc" stroke-width="1.5"/></svg>
<svg class="ic" style="left:913px;top:195px" width="18" height="18" viewBox="0 0 18 18"><path d="M3 2v14h13M3 16L15 4" fill="none" stroke="#e00" stroke-width="1.3"/><path d="M1 4l2-3 2 3M14 14l3 2-3 2M12 3h4v4" fill="#e00" stroke="#e00"/></svg>
<svg class="ic" style="left:913px;top:218px" width="18" height="18" viewBox="0 0 18 18"><path d="M3 2v14h13M3 16L14 5" fill="none" stroke="#000" stroke-width="1.2"/><path d="M14 14l3 2-3 2z" fill="#e00"/><path d="M6 16h10" stroke="#e00" stroke-width="1.3"/></svg>
<svg class="ic" style="left:913px;top:241px" width="18" height="18" viewBox="0 0 18 18"><path d="M3 16h13M3 16L15 4" fill="none" stroke="#000" stroke-width="1.2"/><path d="M3 16V3M1 5l2-3 2 3" fill="none" stroke="#e00" stroke-width="1.3"/></svg>
<svg class="ic" style="left:913px;top:264px" width="18" height="18" viewBox="0 0 18 18"><text x="1" y="13" font-size="9" fill="#999" font-family="Liberation Sans" font-weight="bold">XY</text><path d="M3 5c3-4 9-4 12 0M15 13c-3 4-9 4-12 0" fill="none" stroke="#999"/></svg>
<svg class="ic" style="left:913px;top:287px" width="18" height="18" viewBox="0 0 18 18"><path d="M2 2v14h14" fill="none" stroke="#000" stroke-width="1.3"/><circle cx="12" cy="4" r="1.8" fill="#000"/><path d="M6 9l4-3 3 2-2 4 3 3M9 12l-3 3" fill="none" stroke="#000" stroke-width="1.8"/></svg>
<svg class="ic" style="left:913px;top:319px" width="18" height="18" viewBox="0 0 18 18"><rect x="2.5" y="2.5" width="13" height="13" fill="#fff" stroke="#000" stroke-width="1.2"/><path d="M2.5 7h13M5 11v3h3M10 11v3h3" fill="none" stroke="#000"/></svg>
<svg class="ic" style="left:913px;top:342px" width="18" height="18" viewBox="0 0 18 18"><rect x="2.5" y="2.5" width="13" height="6" fill="none" stroke="#000"/><rect x="2.5" y="10" width="6" height="6" fill="none" stroke="#000"/><rect x="9.5" y="10" width="6" height="6" fill="none" stroke="#000"/><path d="M4 5v2h2M10 5v2h2M4 12v2h2M11 12v2h2" fill="none" stroke="#000" stroke-width=".8"/></svg>
<svg class="ic" style="left:913px;top:365px" width="18" height="18" viewBox="0 0 18 18"><rect x="2.5" y="2.5" width="6" height="6" fill="none" stroke="#000"/><rect x="9.5" y="2.5" width="6" height="6" fill="none" stroke="#000"/><rect x="2.5" y="10" width="13" height="6" fill="none" stroke="#000"/><path d="M4 4v2h2M11 4v2h2M4 12v2h2M10 12v2h2" fill="none" stroke="#000" stroke-width=".8"/></svg>
<svg class="ic" style="left:913px;top:388px" width="18" height="18" viewBox="0 0 18 18"><rect x="2.5" y="2.5" width="13" height="6" fill="#fff" stroke="#1030c0"/><path d="M3 6l3-2 3 2 3-2 3 2" fill="none" stroke="#e00"/><rect x="2.5" y="10" width="13" height="6" fill="#fff" stroke="#1030c0"/><rect x="5" y="8" width="11" height="3" fill="#2040d0"/></svg>
<svg class="ic" style="left:913px;top:419px" width="18" height="18" viewBox="0 0 18 18"><path d="M4 2v13h12" fill="none" stroke="#000" stroke-width="1.3"/><path d="M7 15v-2M10 15v-2M13 15v-2" stroke="#000"/></svg>
<svg class="ic" style="left:913px;top:442px" width="18" height="18" viewBox="0 0 18 18"><path d="M4 3h12M4 3v13h12M16 3v13" fill="none" stroke="#999" stroke-dasharray="1.5 1"/><path d="M4 3h12" stroke="#000" stroke-width="1.3"/></svg>
<svg class="ic" style="left:913px;top:465px" width="18" height="18" viewBox="0 0 18 18"><path d="M4 3v13h12M16 3v13" fill="none" stroke="#999" stroke-dasharray="1.5 1"/><path d="M16 3v13" stroke="#000" stroke-width="1.3"/></svg>
<svg class="ic" style="left:913px;top:488px" width="18" height="18" viewBox="0 0 18 18"><rect x="3.5" y="3.5" width="12" height="12" fill="none" stroke="#777" stroke-dasharray="1.5 1"/><path d="M3.5 3.5h12v12" fill="none" stroke="#333" stroke-width="1.1"/></svg>
<svg class="ic" style="left:913px;top:511px" width="18" height="18" viewBox="0 0 18 18"><path d="M4 3v13h12" fill="none" stroke="#999" stroke-dasharray="1.5 1"/><path d="M8 3v6h6" fill="none" stroke="#000" stroke-width="1.3"/></svg>
<svg class="ic" style="left:913px;top:534px" width="18" height="18" viewBox="0 0 18 18"><path d="M4 3v13h12" fill="none" stroke="#999" stroke-dasharray="1.5 1"/><path d="M8 3v6h6" fill="none" stroke="#000" stroke-width="1.3"/><path d="M11 8l3-4" stroke="#e00"/></svg>
<div class="a" style="left:913px;top:314px;width:20px;height:1px;background:#c0c2d0"></div>
<div class="a" style="left:913px;top:413px;width:20px;height:1px;background:#c0c2d0"></div>
<svg class="ic" style="left:925px;top:558px" width="8" height="9" viewBox="0 0 8 9"><path d="M1 1v7M3 1l4 3.5L3 8z" fill="#000" stroke="#000" stroke-width=".7"/></svg>
<svg class="ic" style="left:913px;top:581px" width="18" height="18" viewBox="0 0 18 18"><rect x="5.5" y="1.5" width="6" height="5" fill="none" stroke="#777"/><rect x="5.5" y="9.5" width="10" height="6" fill="none" stroke="#777"/><path d="M3 1v15" stroke="#777"/></svg>
<svg class="ic" style="left:913px;top:604px" width="18" height="18" viewBox="0 0 18 18"><rect x="5.5" y="1.5" width="6" height="5" fill="none" stroke="#777"/><rect x="3.5" y="9.5" width="9" height="6" fill="none" stroke="#777"/><path d="M14 1v15" stroke="#777" stroke-dasharray="1.5 1"/></svg>
<svg class="ic" style="left:913px;top:632px" width="18" height="18" viewBox="0 0 18 18"><rect x="2.5" y="4.5" width="6" height="11" fill="none" stroke="#777"/><rect x="10.5" y="4.5" width="5" height="6" fill="none" stroke="#777"/><path d="M1 2h16" stroke="#777" stroke-dasharray="1.5 1"/></svg>
<svg class="ic" style="left:913px;top:656px" width="18" height="18" viewBox="0 0 18 18"><rect x="2.5" y="2.5" width="6" height="11" fill="none" stroke="#777"/><rect x="10.5" y="7.5" width="5" height="6" fill="none" stroke="#777"/><path d="M1 16h16" stroke="#777" stroke-dasharray="1.5 1"/></svg>
<svg class="ic" style="left:913px;top:688px" width="18" height="18" viewBox="0 0 18 18"><rect x="4.5" y="2.5" width="8" height="5" fill="none" stroke="#777"/><rect x="3.5" y="9.5" width="11" height="6" fill="none" stroke="#777"/><path d="M9 1v17" stroke="#777"/></svg>
<svg class="ic" style="left:913px;top:711px" width="18" height="18" viewBox="0 0 18 18"><rect x="2.5" y="4.5" width="5" height="8" fill="none" stroke="#777"/><rect x="9.5" y="3.5" width="6" height="11" fill="none" stroke="#777"/><path d="M1 9h17" stroke="#777"/></svg>
<svg class="ic" style="left:913px;top:742px" width="18" height="18" viewBox="0 0 18 18"><rect x="5.5" y="2.5" width="9" height="5" fill="none" stroke="#777"/><rect x="5.5" y="10.5" width="9" height="5" fill="none" stroke="#777"/><path d="M3 1v16M16 1v16" stroke="#777" stroke-dasharray="1.5 1"/></svg>
<svg class="ic" style="left:913px;top:765px" width="18" height="18" viewBox="0 0 18 18"><rect x="2.5" y="4.5" width="5" height="9" fill="none" stroke="#777"/><rect x="10.5" y="4.5" width="5" height="9" fill="none" stroke="#777"/><path d="M1 2h16M1 16h16" stroke="#777" stroke-dasharray="1.5 1"/></svg>
<div class="a" style="left:914px;top:628px;width:22px;height:1px;background:#c0c2d0"></div>
<div class="a" style="left:914px;top:682px;width:22px;height:1px;background:#c0c2d0"></div>
<div class="a" style="left:914px;top:737px;width:22px;height:1px;background:#c0c2d0"></div>
<div class="a" style="left:914px;top:790px;width:22px;height:1px;background:#c0c2d0"></div>
<svg class="ic" style="left:913px;top:804px" width="8" height="9" viewBox="0 0 8 9"><path d="M1 2l2.5 2 2.5-2M1 5l2.5 2 2.5-2" fill="none" stroke="#000"/></svg>
<svg class="ic" style="left:934px;top:803px" width="8" height="9" viewBox="0 0 8 9"><path d="M1 1v7M3 1l4 3.5L3 8z" fill="#000" stroke="#000" stroke-width=".7"/></svg>
<div class="a" style="left:950px;top:161px;width:192px;height:31px;background:linear-gradient(#dae3ed,#ccd8e5)"></div>
<div class="t" style="left:954px;top:168px;font-size:17.5px">对象管理器</div>
<svg class="ic" style="left:1093px;top:173px" width="10" height="6" viewBox="0 0 10 6"><path d="M0 0h10l-5 5z" fill="#000"/></svg>
<svg class="ic" style="left:1111px;top:169px" width="10" height="13" viewBox="0 0 10 13"><path d="M2.5 1h5v6h-5zM1 7h8M5 7v5" fill="none" stroke="#000" stroke-width="1.6"/><rect x="4.5" y="1" width="3" height="6" fill="#000"/></svg>
<svg class="ic" style="left:1127px;top:170px" width="11" height="11" viewBox="0 0 11 11"><path d="M1 1l9 9M10 1l-9 9" stroke="#000" stroke-width="1.5"/></svg>
<svg class="ic" style="left:1049px;top:167px" width="19" height="18" viewBox="0 0 19 18"><path d="M1.5 1v15h16" fill="none" stroke="#000" stroke-width="1.2"/><path d="M3 5l4 5 4-4 4 4" fill="none" stroke="#e00" stroke-width="1.3"/><path d="M4 9l3-4 4 5 4-4" fill="none" stroke="#000" stroke-width=".9"/></svg>
<svg class="ic" style="left:1069px;top:166px" width="19" height="19" viewBox="0 0 19 19"><path d="M1.5 1.5h15v10h-5l-3 5v-5h-7z" fill="#fff" stroke="#1a6fd8" stroke-width="1.4"/><path d="M9 3v8M5 7h8" stroke="#e00" stroke-width="1.8"/></svg>
<div class="a" style="left:950px;top:191px;width:192px;height:90px;background:#fff;border:2px solid #4a4a4a"></div>
<div class="a" style="left:1120px;top:193px;width:20px;height:86px;background:#f0f0f0"></div>
<div class="a" style="left:1121px;top:223px;width:18px;height:29px;background:#cdcdcd"></div>
<svg class="ic" style="left:1124px;top:203px" width="12" height="8" viewBox="0 0 12 8"><path d="M1 6l5-5 5 5" fill="none" stroke="#606060" stroke-width="1.3"/></svg>
<svg class="ic" style="left:1124px;top:264px" width="12" height="8" viewBox="0 0 12 8"><path d="M1 1l5 5 5-5" fill="none" stroke="#606060" stroke-width="1.3"/></svg>
<div class="a" style="left:960px;top:193px;width:1px;height:9px;border-left:1px dotted #a0a0a0"></div>
<div class="a" style="left:960px;top:202px;width:10px;height:1px;border-top:1px dotted #a0a0a0"></div>
<div class="a" style="left:976px;top:208px;width:1px;height:16px;border-left:1px dotted #a0a0a0"></div>
<div class="a" style="left:976px;top:224px;width:11px;height:1px;border-top:1px dotted #a0a0a0"></div>
<div class="a" style="left:993px;top:230px;width:1px;height:50px;border-left:1px dotted #a0a0a0"></div>
<div class="a" style="left:993px;top:245px;width:12px;height:1px;border-top:1px dotted #a0a0a0"></div>
<div class="a" style="left:993px;top:267px;width:12px;height:1px;border-top:1px dotted #a0a0a0"></div>
<div class="a" style="left:970px;top:196px;width:12px;height:12px;background:linear-gradient(#f4f4f4,#d8d8d8);border:1px solid #a8a8a8"></div><div class="a" style="left:973px;top:201px;width:6px;height:2px;background:#3050a0"></div>
<div class="a" style="left:985px;top:194px;width:17px;height:17px;background:#fff;border:1px solid #333"></div><svg class="ic" style="left:988px;top:198px" width="12" height="10" viewBox="0 0 12 10"><path d="M1 5l3 3 6-7" fill="none" stroke="#444" stroke-width="1.4"/></svg>
<div class="t" style="left:1005px;top:194px;font-size:13.5px">Layer1</div>
<div class="a" style="left:987px;top:218px;width:12px;height:12px;background:linear-gradient(#f4f4f4,#d8d8d8);border:1px solid #a8a8a8"></div><div class="a" style="left:990px;top:223px;width:6px;height:2px;background:#3050a0"></div>
<div class="a" style="left:1001px;top:216px;width:17px;height:17px;background:#fff;border:1px solid #333"></div><svg class="ic" style="left:1004px;top:220px" width="12" height="10" viewBox="0 0 12 10"><path d="M1 5l3 3 6-7" fill="none" stroke="#444" stroke-width="1.4"/></svg>
<div class="t" style="left:1021px;top:216px;font-size:13.5px">g1</div>
<div class="a" style="left:1017px;top:237px;width:17px;height:17px;background:#fff;border:1px solid #333"></div><svg class="ic" style="left:1020px;top:241px" width="12" height="10" viewBox="0 0 12 10"><path d="M1 5l3 3 6-7" fill="none" stroke="#444" stroke-width="1.4"/></svg>
<div class="a" style="left:1038px;top:238px;width:42px;height:15px;background:#ff0000;border:1px solid #777"></div>
<div class="a" style="left:1084px;top:237px;width:36px;height:18px;overflow:hidden"><div class="t" style="left:0;top:2px;font-size:14px;font-weight:normal">2022年</div></div>
<div class="a" style="left:1017px;top:259px;width:17px;height:17px;background:#fff;border:1px solid #333"></div><svg class="ic" style="left:1020px;top:263px" width="12" height="10" viewBox="0 0 12 10"><path d="M1 5l3 3 6-7" fill="none" stroke="#444" stroke-width="1.4"/></svg>
<div class="a" style="left:1038px;top:260px;width:42px;height:15px;background:#00ff00;border:1px solid #777"></div>
<div class="a" style="left:1084px;top:259px;width:36px;height:18px;overflow:hidden"><div class="t" style="left:0;top:2px;font-size:14px;font-weight:bold">2023年</div></div>
<div class="a" style="left:950px;top:284px;width:192px;height:31px;background:linear-gradient(#dae3ed,#ccd8e5)"></div>
<div class="t" style="left:954px;top:293px;font-size:15.5px">Apps</div>
<svg class="ic" style="left:1093px;top:296px" width="10" height="6" viewBox="0 0 10 6"><path d="M0 0h10l-5 5z" fill="#000"/></svg>
<svg class="ic" style="left:1111px;top:292px" width="10" height="13" viewBox="0 0 10 13"><path d="M2.5 1h5v6h-5zM1 7h8M5 7v5" fill="none" stroke="#000" stroke-width="1.6"/><rect x="4.5" y="1" width="3" height="6" fill="#000"/></svg>
<svg class="ic" style="left:1127px;top:293px" width="11" height="11" viewBox="0 0 11 11"><path d="M1 1l9 9M10 1l-9 9" stroke="#000" stroke-width="1.5"/></svg>
<div class="a" style="left:950px;top:315px;width:192px;height:498px;background:#f0f0f0"></div>
<div class="a" style="left:981px;top:318px;width:138px;height:495px;background:#fff;border-left:1px solid #8a8a8a;border-top:1px solid #d0d0d0"></div>
<div class="a" style="left:1119px;top:318px;width:22px;height:495px;background:#f0f0f0"></div>
<div class="a" style="left:1120px;top:340px;width:20px;height:211px;background:#cdcdcd"></div>
<svg class="ic" style="left:1124px;top:325px" width="12" height="8" viewBox="0 0 12 8"><path d="M1 6l5-5 5 5" fill="none" stroke="#606060" stroke-width="1.3"/></svg>
<svg class="ic" style="left:1124px;top:796px" width="12" height="8" viewBox="0 0 12 8"><path d="M1 1l5 5 5-5" fill="none" stroke="#606060" stroke-width="1.3"/></svg>
<svg class="ic" style="left:961px;top:320px" width="9" height="9" viewBox="0 0 9 9"><path d="M0 0h8M0 7h8l-4-4z" fill="#000" stroke="#000" stroke-width=".8"/></svg>
<svg class="ic" style="left:961px;top:337px" width="9" height="8" viewBox="0 0 9 8"><path d="M0 6h8l-4-4z" fill="#000"/></svg>
<svg class="ic" style="left:961px;top:353px" width="9" height="8" viewBox="0 0 9 8"><path d="M0 2h8l-4 4z" fill="#000"/></svg>
<svg class="ic" style="left:961px;top:368px" width="9" height="9" viewBox="0 0 9 9"><path d="M0 1h8l-4 4zM0 8h8" fill="#000" stroke="#000" stroke-width=".8"/></svg>
<svg class="ic" style="left:950px;top:383px" width="33" height="165" viewBox="0 0 33 165"><path d="M32 0L18 6 C 4 10 4 10 4 20 V 44 L 32 58" fill="#fff" stroke="#8a8a8a"/><path d="M32 58L12 48 C 4 46 4 46 4 56 V 102 L32 118" fill="#f0f0f0" stroke="#8a8a8a"/><path d="M32 118L12 110 C 4 108 4 108 4 116 V 150 L32 162" fill="#f0f0f0" stroke="#8a8a8a"/></svg>
<div class="t" style="left:977px;top:396px;font-size:15px;font-weight:bold;transform:rotate(90deg);transform-origin:0 0">所有</div>
<div class="t" style="left:977px;top:438px;font-size:15px;transform:rotate(90deg);transform-origin:0 0">连接器</div>
<div class="t" style="left:977px;top:497px;font-size:15px;transform:rotate(90deg);transform-origin:0 0">统计</div>
<svg class="ic" style="left:1008px;top:320px" width="41" height="41" viewBox="0 0 41 41"><rect x="0.5" y="0.5" width="34" height="34" fill="#fff" stroke="#4a90d0"/><rect x="0.5" y="0.5" width="34" height="4" fill="#2a80d0"/><rect x="4" y="8" width="11" height="22" fill="#c8c8c8"/><rect x="18" y="8" width="13" height="4" fill="#ddd"/><rect x="18" y="15" width="8" height="3" fill="#ddd"/><circle cx="29" cy="29" r="11" fill="#3cb54a"/><circle cx="29" cy="29" r="8.5" fill="none" stroke="#fff" stroke-width="1.2"/><path d="M29 23v12M23 29h12" stroke="#fff" stroke-width="3"/></svg>
<div class="t" style="left:982px;top:367px;width:93px;text-align:center;font-size:16px;color:#000">添加App</div>
<svg class="ic" style="left:1010px;top:417px" width="38" height="38" viewBox="0 0 38 38"><rect width="38" height="38" fill="#fde4c4"/><path d="M2 20l4-3 3-12 3 10 3-4 3 6 4-10 3 8 3-3 3 6 4-1v8H2z" fill="#e82020"/><path d="M2 24h34" stroke="#e82020" stroke-width="2"/><circle cx="19" cy="22" r="7" fill="none" stroke="#2a2a3a" stroke-width="3.2"/><path d="M24 27l7 7" stroke="#2a2a3a" stroke-width="3.5" stroke-linecap="round"/></svg>
<div class="t" style="left:982px;top:461px;width:93px;text-align:center;font-size:16px;color:#000">Theme</div>
<div class="t" style="left:982px;top:481px;width:93px;text-align:center;font-size:16px;color:#000">Preview</div>
<svg class="ic" style="left:1008px;top:509px" width="42" height="42" viewBox="0 0 42 42"><path d="M14 3l3.5 7 7.5 1-5.5 5 1.5 7.5L14 20l-7 3.5 1.5-7.5L3 11l7.5-1z" fill="#e8c030" stroke="#c89a10" stroke-width=".6"/><path d="M18 18l20 20" stroke="#2a2a3a" stroke-width="2.5" stroke-linecap="round"/><path d="M31 6l1 2 2 1-2 1-1 2-1-2-2-1 2-1z" fill="#e8c030"/><path d="M5 28l1 2 2 1-2 1-1 2-1-2-2-1 2-1z" fill="#e8c030"/></svg>
<div class="t" style="left:982px;top:556px;width:93px;text-align:center;font-size:16px;color:#000">Stats</div>
<div class="t" style="left:982px;top:576px;width:93px;text-align:center;font-size:16px;color:#000">Advisor</div>
<svg class="ic" style="left:1010px;top:604px" width="38" height="38" viewBox="0 0 38 38"><rect width="38" height="38" fill="#1f4f94"/><path d="M22 7h13l-2 6h-8l-1 4h7l-2 5h-7l-3 11h-6z" fill="#bcd4f0"/><path d="M3 12h15M5 16h12M2 20h14M6 24h9M4 28h10" stroke="#8ab0e0" stroke-width="1.4"/></svg>
<div class="t" style="left:982px;top:649px;width:93px;text-align:center;font-size:16px;color:#000">Speedy Fit</div>
<svg class="ic" style="left:1010px;top:697px" width="38" height="38" viewBox="0 0 38 38"><rect width="38" height="38" fill="#a9c8ec"/><path d="M3 2v33h33" fill="none" stroke="#fff" stroke-width="1.5"/><path d="M5 33c14 0 22-6 27-28" fill="none" stroke="#f08ab0" stroke-width="2"/><circle cx="10" cy="32" r="1.5" fill="#fff"/><circle cx="18" cy="29" r="1.5" fill="#fff"/><circle cx="24" cy="25" r="1.5" fill="#fff"/><circle cx="28" cy="19" r="1.5" fill="#fff"/><circle cx="31" cy="10" r="1.5" fill="#fff"/></svg>
<div class="t" style="left:982px;top:743px;width:93px;text-align:center;font-size:16px;color:#909090">Simple Fit</div>
<svg class="ic" style="left:1018px;top:796px" width="31" height="17" viewBox="0 0 31 17"><rect x="8" y="1" width="22" height="17" fill="#fff" stroke="#1f5aa8" stroke-width="1.2"/><path d="M14 5h13M14 9h13M14 13h13" stroke="#1f5aa8" stroke-width="1.5"/><rect x="0" y="4" width="14" height="14" fill="#1f5aa8"/><path d="M2 7l2.5 8 2.5-6 2.5 6 2.5-8" fill="none" stroke="#fff" stroke-width="1.4"/></svg>
<div class="tb" style="left:63px;top:782px;width:315px;height:30px;border-radius:4px 0 0 4px"></div><div class="grip" style="left:68px;top:789px;height:17px"></div>
<div class="a" style="left:374px;top:781px;width:12px;height:31px;background:linear-gradient(#c6c8d8,#d6d8e4);border-radius:5px 5px 5px 5px"></div><svg class="ic" style="left:376px;top:800px" width="10" height="8" viewBox="0 0 10 8"><path d="M2.5 1.5h5" stroke="#000" stroke-width="1"/><path d="M2 3.5h6l-3 3z" fill="#000"/></svg>
<div class="tb" style="left:387px;top:782px;width:201px;height:30px;border-radius:4px 0 0 4px"></div><div class="grip" style="left:392px;top:789px;height:17px"></div>
<div class="a" style="left:583px;top:781px;width:12px;height:31px;background:linear-gradient(#c6c8d8,#d6d8e4);border-radius:5px 5px 5px 5px"></div><svg class="ic" style="left:585px;top:800px" width="10" height="8" viewBox="0 0 10 8"><path d="M2.5 1.5h5" stroke="#000" stroke-width="1"/><path d="M2 3.5h6l-3 3z" fill="#000"/></svg>
<div class="tb" style="left:596px;top:782px;width:164px;height:30px;border-radius:4px 0 0 4px"></div><div class="grip" style="left:601px;top:789px;height:17px"></div>
<div class="a" style="left:757px;top:781px;width:12px;height:31px;background:linear-gradient(#c6c8d8,#d6d8e4);border-radius:5px 5px 5px 5px"></div><svg class="ic" style="left:759px;top:800px" width="10" height="8" viewBox="0 0 10 8"><path d="M2.5 1.5h5" stroke="#000" stroke-width="1"/><path d="M2 3.5h6l-3 3z" fill="#000"/></svg>
<div class="tb" style="left:770px;top:782px;width:135px;height:30px;border-radius:4px 0 0 4px"></div><div class="grip" style="left:775px;top:789px;height:17px"></div>
<div class="a" style="left:898px;top:781px;width:12px;height:31px;background:linear-gradient(#c6c8d8,#d6d8e4);border-radius:5px 5px 5px 5px"></div><svg class="ic" style="left:900px;top:787px" width="10" height="8" viewBox="0 0 10 8"><path d="M2 1.5l2.5 2-2.5 2zM5.5 1.5l2.5 2-2.5 2z" fill="#000"/></svg><svg class="ic" style="left:900px;top:800px" width="10" height="8" viewBox="0 0 10 8"><path d="M2.5 1.5h5" stroke="#000" stroke-width="1"/><path d="M2 3.5h6l-3 3z" fill="#000"/></svg>
<svg class="ic" style="left:74px;top:788px" width="18" height="18" viewBox="0 0 18 18"><path d="M2 16L16 2" stroke="#555" stroke-width="1.1"/></svg>
<svg class="ic" style="left:96px;top:795px" width="7" height="4" viewBox="0 0 7 4"><path d="M0 0h6l-3 3z" fill="#000"/></svg>
<svg class="ic" style="left:106px;top:788px" width="18" height="18" viewBox="0 0 18 18"><rect x="2" y="12" width="3" height="3" fill="#555"/><rect x="7" y="7" width="3" height="3" fill="#555"/><rect x="12" y="2" width="3" height="3" fill="#555"/></svg>
<svg class="ic" style="left:128px;top:795px" width="7" height="4" viewBox="0 0 7 4"><path d="M0 0h6l-3 3z" fill="#000"/></svg>
<svg class="ic" style="left:137px;top:788px" width="18" height="18" viewBox="0 0 18 18"><path d="M3 15L15 3" stroke="#555"/><rect x="2" y="13" width="3" height="3" fill="#555"/><rect x="8" y="8" width="3" height="3" fill="#555"/><rect x="13" y="2" width="3" height="3" fill="#555"/></svg>
<svg class="ic" style="left:159px;top:795px" width="7" height="4" viewBox="0 0 7 4"><path d="M0 0h6l-3 3z" fill="#000"/></svg>
<svg class="ic" style="left:167px;top:788px" width="18" height="18" viewBox="0 0 18 18"><path d="M3 17V6M7 17V3M11 17V5M15 17V9" stroke="#666" stroke-width="2.6"/><path d="M1 17h17" stroke="#666"/></svg>
<svg class="ic" style="left:189px;top:795px" width="7" height="4" viewBox="0 0 7 4"><path d="M0 0h6l-3 3z" fill="#000"/></svg>
<svg class="ic" style="left:198px;top:788px" width="18" height="18" viewBox="0 0 18 18"><rect x="1.5" y="1.5" width="15" height="15" fill="#fff" stroke="#666"/><path d="M2 16L16 2M5 5l10 8" stroke="#666"/></svg>
<svg class="ic" style="left:220px;top:795px" width="7" height="4" viewBox="0 0 7 4"><path d="M0 0h6l-3 3z" fill="#000"/></svg>
<svg class="ic" style="left:228px;top:788px" width="18" height="18" viewBox="0 0 18 18"><path d="M9 1v16M5 3h8M5 15h8" stroke="#aaa"/><rect x="4.5" y="6.5" width="9" height="5" fill="#fff" stroke="#aaa"/></svg>
<svg class="ic" style="left:250px;top:795px" width="7" height="4" viewBox="0 0 7 4"><path d="M0 0h6l-3 3z" fill="#000"/></svg>
<svg class="ic" style="left:259px;top:788px" width="18" height="18" viewBox="0 0 18 18"><path d="M1 17V9l4 3 4-5 4 4 4-6v12z" fill="#666"/></svg>
<svg class="ic" style="left:281px;top:795px" width="7" height="4" viewBox="0 0 7 4"><path d="M0 0h6l-3 3z" fill="#000"/></svg>
<svg class="ic" style="left:291px;top:788px" width="18" height="18" viewBox="0 0 18 18"><circle cx="10" cy="9" r="7" fill="none" stroke="#666"/><text x="7" y="13" font-size="10" fill="#666" font-family="Liberation Sans">r</text><path d="M2 1v16" stroke="#666" stroke-dasharray="1 1"/></svg>
<svg class="ic" style="left:313px;top:795px" width="7" height="4" viewBox="0 0 7 4"><path d="M0 0h6l-3 3z" fill="#000"/></svg>
<svg class="ic" style="left:322px;top:788px" width="18" height="18" viewBox="0 0 18 18"><path d="M5 1v16M13 3v14" stroke="#666"/><rect x="3" y="5" width="4" height="7" fill="#fff" stroke="#666"/><rect x="11" y="7" width="4" height="6" fill="#666"/></svg>
<svg class="ic" style="left:344px;top:795px" width="7" height="4" viewBox="0 0 7 4"><path d="M0 0h6l-3 3z" fill="#000"/></svg>
<svg class="ic" style="left:354px;top:788px" width="18" height="18" viewBox="0 0 18 18"><path d="M2 5l4-3h10v10l-4 4H2z" fill="#ddd" stroke="#666"/><path d="M2 5h10v11M12 5l4-3" fill="none" stroke="#666"/><path d="M4 8h6v6H4z" fill="#aaa"/></svg>
<svg class="ic" style="left:397px;top:788px" width="18" height="18" viewBox="0 0 18 18"><path d="M2 6l4-4h6l-4 4zM2 6h6v11H2zM8 6l4-4v11l-4 4" fill="#eee" stroke="#777"/><path d="M10 8h5v9h-5z" fill="#ddd" stroke="#777"/></svg>
<svg class="ic" style="left:419px;top:795px" width="7" height="4" viewBox="0 0 7 4"><path d="M0 0h6l-3 3z" fill="#000"/></svg>
<svg class="ic" style="left:436px;top:788px" width="18" height="18" viewBox="0 0 18 18"><path d="M2 8l5-5h10l-5 5zM2 8h10v8H2zM12 8l5-5v8l-5 5" fill="#eee" stroke="#777"/></svg>
<svg class="ic" style="left:458px;top:795px" width="7" height="4" viewBox="0 0 7 4"><path d="M0 0h6l-3 3z" fill="#000"/></svg>
<svg class="ic" style="left:467px;top:788px" width="18" height="18" viewBox="0 0 18 18"><path d="M2 7l5-5h9v10l-5 5H2z" fill="#eee" stroke="#777"/><path d="M2 7h9v10M11 7l5-5" fill="none" stroke="#777"/><circle cx="5" cy="10" r="1" fill="#777"/><circle cx="8" cy="14" r="1" fill="#777"/><circle cx="13" cy="6" r="1" fill="#777"/></svg>
<svg class="ic" style="left:489px;top:795px" width="7" height="4" viewBox="0 0 7 4"><path d="M0 0h6l-3 3z" fill="#000"/></svg>
<svg class="ic" style="left:498px;top:788px" width="18" height="18" viewBox="0 0 18 18"><rect x="1" y="2" width="16" height="15" fill="#888"/><path d="M1 6h16M1 10h16M1 14h16M5 2v15M9 2v15M13 2v15" stroke="#bbb" stroke-width=".8"/></svg>
<svg class="ic" style="left:520px;top:795px" width="7" height="4" viewBox="0 0 7 4"><path d="M0 0h6l-3 3z" fill="#000"/></svg>
<svg class="ic" style="left:529px;top:788px" width="18" height="18" viewBox="0 0 18 18"><path d="M1 8l4-5 4 4 4-4 4 5" fill="none" stroke="#888"/><rect x="1" y="9" width="16" height="8" fill="#888"/><path d="M1 13h16M5 9v8M9 9v8M13 9v8" stroke="#bbb" stroke-width=".8"/></svg>
<svg class="ic" style="left:551px;top:795px" width="7" height="4" viewBox="0 0 7 4"><path d="M0 0h6l-3 3z" fill="#000"/></svg>
<svg class="ic" style="left:562px;top:788px" width="18" height="18" viewBox="0 0 18 18"><rect x="1.5" y="1.5" width="15" height="15" fill="#999" stroke="#777"/><path d="M3 3l12 12" stroke="#bbb" stroke-width="3"/></svg>
<svg class="ic" style="left:607px;top:788px" width="18" height="18" viewBox="0 0 18 18"><path d="M2 2l4 4h6l4-4v11H2z" fill="#ddd" stroke="#888"/><circle cx="6" cy="9" r="1" fill="#666"/><circle cx="12" cy="9" r="1" fill="#666"/><path d="M6 12h6" stroke="#666"/><path d="M1 15h16" stroke="#888" stroke-width="2"/></svg>
<svg class="ic" style="left:629px;top:788px" width="18" height="18" viewBox="0 0 18 18"><path d="M2 2h14v11H2z" fill="#ddd" stroke="#888"/><path d="M4 4l10 8M14 4L4 12" stroke="#888"/><path d="M1 15h16" stroke="#888" stroke-width="2.5" stroke-dasharray="2 1"/></svg>
<svg class="ic" style="left:661px;top:788px" width="18" height="18" viewBox="0 0 18 18"><path d="M2 3c3 2 11 2 14 0v7c0 4-3 7-7 7s-7-3-7-7z" fill="#ccc" stroke="#777"/><circle cx="6" cy="8" r="1.2" fill="#555"/><circle cx="12" cy="8" r="1.2" fill="#555"/><path d="M6 12c2 2 4 2 6 0" fill="none" stroke="#555"/></svg>
<svg class="ic" style="left:681px;top:788px" width="18" height="18" viewBox="0 0 18 18"><path d="M1 7h3v3H1zM6 7h3v3H6zM1 12h3v3H1zM6 12h3v3H6z" fill="#999"/><path d="M14 1v16M12 3l2-2 2 2M12 15l2 2 2-2" fill="none" stroke="#888" stroke-width="1.2"/></svg>
<svg class="ic" style="left:703px;top:788px" width="18" height="18" viewBox="0 0 18 18"><path d="M1 7h3v3H1zM6 7h3v3H6z" fill="#e00"/><path d="M1 12h3v3H1zM6 12h3v3H6zM11 7h0" fill="#000"/><path d="M14 1v16M12 3l2-2 2 2M12 15l2 2 2-2" fill="none" stroke="#000" stroke-width="1.2"/></svg>
<svg class="ic" style="left:734px;top:788px" width="18" height="18" viewBox="0 0 18 18"><path d="M1 6h3v3H1zM5 6h3v3H5zM1 11h3v3H1zM5 11h3v3H5z" fill="#000"/><path d="M5 6h3v3H5z" fill="#e00"/><path d="M14 1v16M12 3l2-2 2 2M12 15l2 2 2-2" fill="none" stroke="#000" stroke-width="1.2"/></svg>
<svg class="ic" style="left:777px;top:788px" width="18" height="18" viewBox="0 0 18 18"><rect x="6" y="1" width="7" height="15" fill="#e00" stroke="#200" stroke-width=".8"/><path d="M2 8c0 5 14 5 14 0M16 8l-3-2M16 8l1 3" fill="none" stroke="#1030e0" stroke-width="2"/></svg>
<svg class="ic" style="left:799px;top:788px" width="18" height="18" viewBox="0 0 18 18"><rect x="5" y="1" width="7" height="15" fill="#e00" stroke="#200" stroke-width=".8"/><path d="M16 8c0 5-14 5-14 0M2 8l3-2M2 8l-1 3" fill="none" stroke="#1030e0" stroke-width="2"/></svg>
<svg class="ic" style="left:822px;top:788px" width="18" height="18" viewBox="0 0 18 18"><path d="M2 4l5-2 5 13-5 2z" fill="#e00" stroke="#200" stroke-width=".8"/><path d="M9 5h8M12 2l-3 3 3 3" fill="none" stroke="#1030e0" stroke-width="2"/></svg>
<svg class="ic" style="left:844px;top:788px" width="18" height="18" viewBox="0 0 18 18"><path d="M11 2l5 2-5 13-5-2z" fill="#e00" stroke="#200" stroke-width=".8"/><path d="M1 5h8M6 2l3 3-3 3" fill="none" stroke="#1030e0" stroke-width="2"/></svg>
<svg class="ic" style="left:867px;top:788px" width="18" height="18" viewBox="0 0 18 18"><path d="M4 6h10l3 9H1z" fill="#e00" stroke="#200" stroke-width=".8"/><rect x="1" y="13" width="16" height="4" fill="#e00" stroke="#200" stroke-width=".8"/><path d="M9 1v9M6 7l3 3 3-3" fill="none" stroke="#1030e0" stroke-width="2"/></svg>
<div class="sep" style="left:432px;top:788px;height:18px"></div>
<div class="sep" style="left:652px;top:788px;height:18px"></div>
<div class="sep" style="left:727px;top:788px;height:18px"></div>
<div class="a" style="left:0;top:813px;width:1143px;height:29px;background:#f0f0f0;border-top:1px solid #dcdcdc"></div>
<div class="a" style="left:503px;top:816px;width:1px;height:24px;background:#d0d0d0"></div>
<div class="a" style="left:525px;top:816px;width:1px;height:24px;background:#d0d0d0"></div>
<div class="a" style="left:532px;top:816px;width:1px;height:24px;background:#d0d0d0"></div>
<div class="a" style="left:591px;top:816px;width:1px;height:24px;background:#d0d0d0"></div>
<div class="a" style="left:678px;top:816px;width:1px;height:24px;background:#d0d0d0"></div>
<div class="a" style="left:937px;top:816px;width:1px;height:24px;background:#d0d0d0"></div>
<div class="a" style="left:1075px;top:816px;width:1px;height:24px;background:#d0d0d0"></div>
<div class="a" style="left:1119px;top:816px;width:1px;height:24px;background:#d0d0d0"></div>
<div class="t" style="left:48px;font-size:16px;top:821px">&lt;<span style="margin-left:4px">&lt;</span> <span style="font-size:17px">最近打开的文件</span> (Ctrl+F1)</div>
<div class="t" style="left:508px;font-size:16px;top:821px">--</div>
<div class="t" style="left:536px;font-size:16px;top:821px">AU : 开</div>
<div class="t" style="left:597px;font-size:16px;top:821px">Light Grids</div>
<div class="t" style="left:683px;font-size:16px;top:821px">2:[Book1]Sheet1!Col("2023年")[1:6]</div>
<div class="t" style="left:942px;font-size:16px;top:821px">23KB - [Graph1]1!</div>
<div class="t" style="left:1078px;font-size:16px;top:821px">弧度</div>
<svg class="ic" style="left:1124px;top:822px" width="18" height="14" viewBox="0 0 18 14"><path d="M14 2h2v2h-2zM10 6h2v2h-2zM14 6h2v2h-2zM6 10h2v2H6zM10 10h2v2h-2zM14 10h2v2h-2z" fill="#b0b0b0"/></svg>
<svg class="ic" style="left:4px;top:797px" width="42" height="44" viewBox="0 0 42 44"><rect x="2" y="6" width="34" height="34" fill="#cfe3f7" stroke="#2a80e0" stroke-width="1.6"/><rect x="13" y="2" width="12" height="6" rx="3" fill="#2a80e0"/><circle cx="18" cy="22" r="9" fill="none" stroke="#e85050" stroke-width="2.2"/><path d="M18 16v6l4 3" fill="none" stroke="#e85050" stroke-width="2"/><path d="M9 20l-2 4 4 0" fill="#e85050"/><circle cx="32" cy="33" r="9" fill="#2a80e0"/><circle cx="31" cy="32" r="3.5" fill="none" stroke="#fff" stroke-width="1.8"/><path d="M33.5 34.5l3 3" stroke="#fff" stroke-width="2"/></svg>
<div class="t" style="left:517px;top:127px;font-size:24px;font-weight:900;color:#ee1c2a;-webkit-text-stroke:0.8px #ee1c2a">我</div>
<div class="t" style="left:556px;top:127px;font-size:24px;font-weight:900;color:#ee1c2a;-webkit-text-stroke:0.8px #ee1c2a">爱</div>
<div class="t" style="left:589px;top:127px;font-size:24px;font-weight:900;color:#ee1c2a;-webkit-text-stroke:0.8px #ee1c2a">分</div>
<div class="t" style="left:622px;top:127px;font-size:24px;font-weight:900;color:#ee1c2a;-webkit-text-stroke:0.8px #ee1c2a">享</div>
<div class="t" style="left:656px;top:127px;font-size:24px;font-weight:900;color:#ee1c2a;-webkit-text-stroke:0.8px #ee1c2a">网</div>
<div class="t" style="left:516px;top:159px;font-size:18.3px;font-weight:bold;color:#ee1c2a;font-family:'Liberation Serif',serif">www.zhanshaoyi.com</div>
<div class="t" style="left:1004px;top:816px;font-size:18.5px;color:rgba(236,40,60,.6);font-family:'Liberation Serif',serif">zhanshaoyi.com</div>
<div class="a" style="left:0;top:0;width:1143px;height:842px;border:1px solid #707070;pointer-events:none"></div>
</body></html>
